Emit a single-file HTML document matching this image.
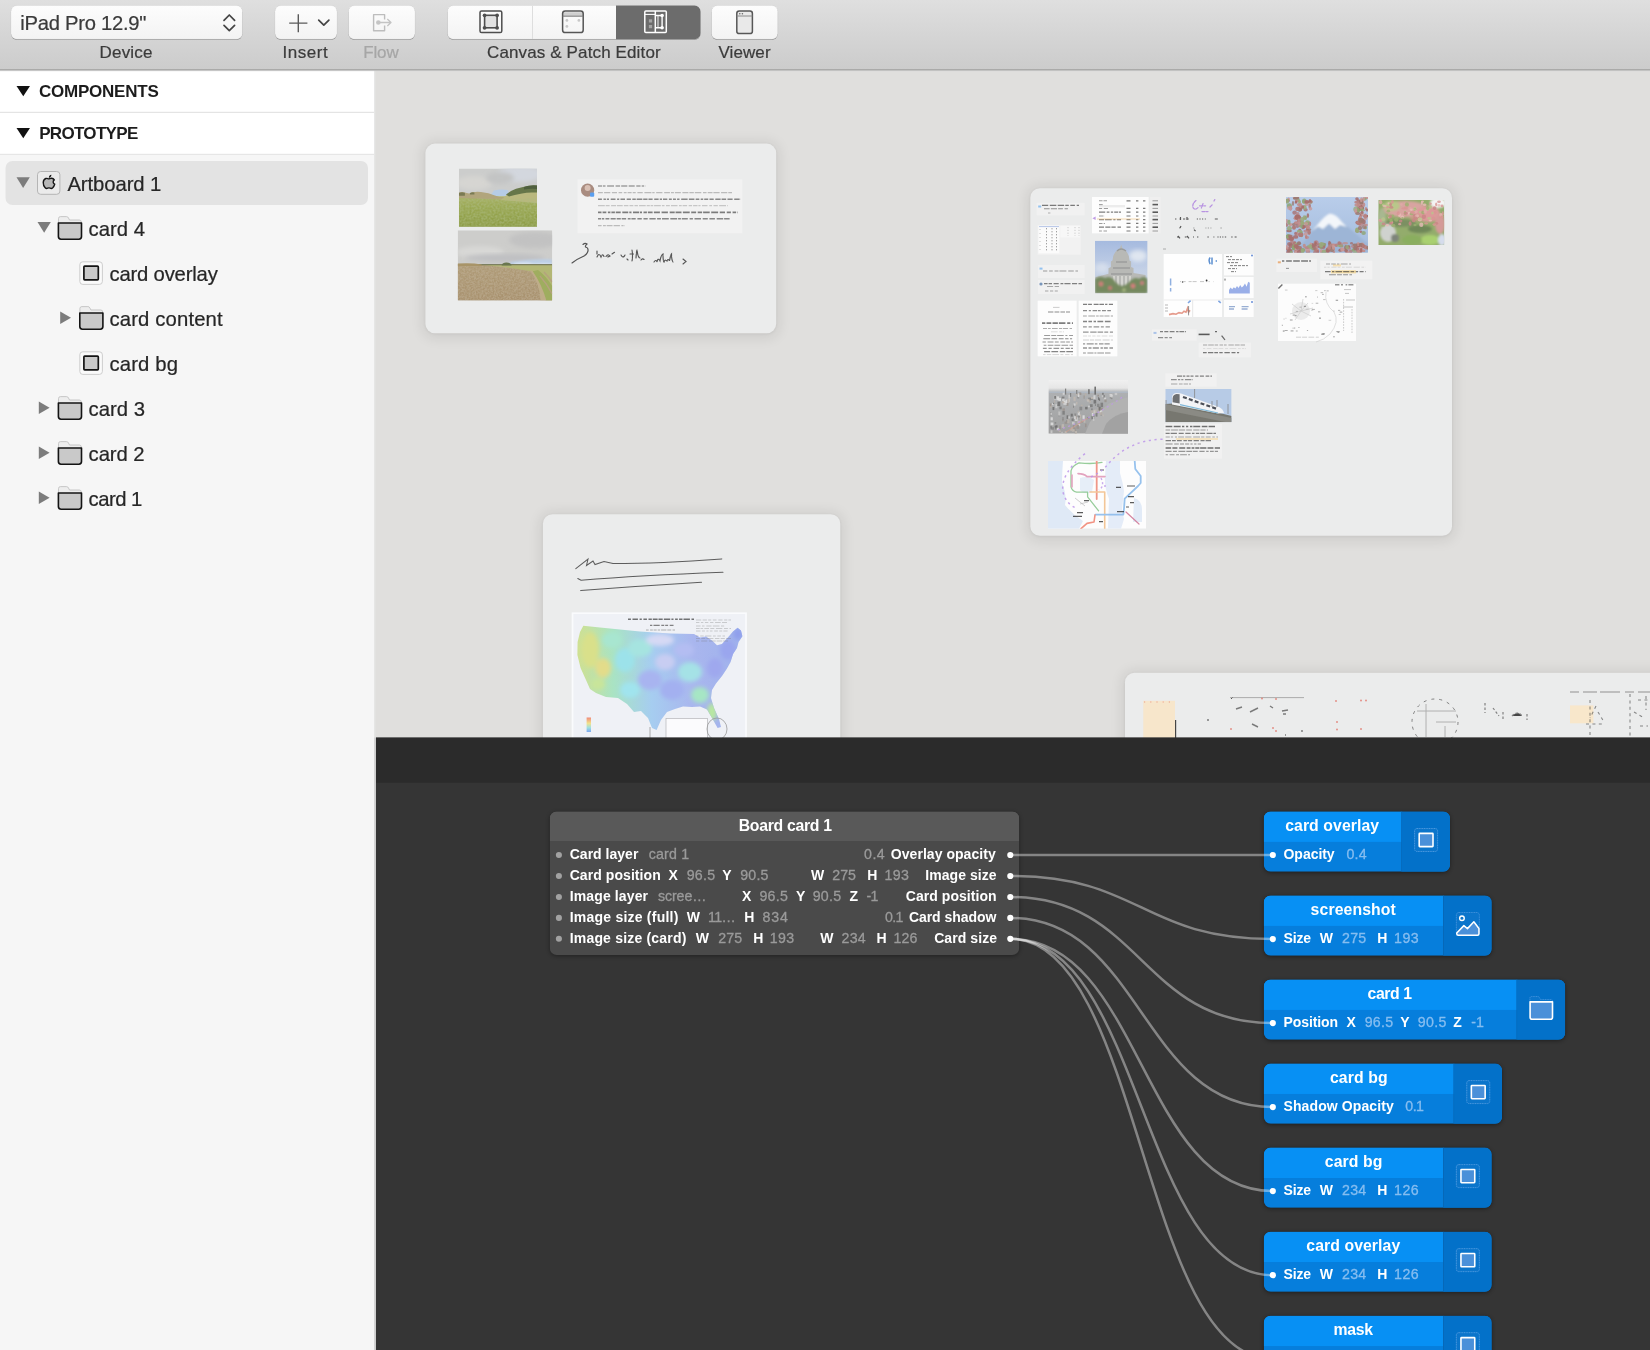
<!DOCTYPE html>
<html><head><meta charset="utf-8"><title>Origami Studio</title>
<style>
html,body{margin:0;padding:0;}
body{width:1650px;height:1350px;overflow:hidden;position:relative;background:#f6f6f6;font-family:"Liberation Sans",sans-serif;}
.a{position:absolute;}
.t{position:absolute;white-space:pre;line-height:1;font-family:"Liberation Sans",sans-serif;}
svg{position:absolute;overflow:visible;}
.btn{position:absolute;top:5.5px;height:34px;border-radius:6px;background:linear-gradient(#fdfdfd,#f4f4f4);box-shadow:0 0 0 0.5px rgba(0,0,0,.10),0 1px 1.5px rgba(0,0,0,.22);}
</style></head><body>
<!-- canvas -->
<div class="a" id="cv" style="left:0;top:0;width:1650px;height:737.6px;overflow:hidden;background:#e0dfdd;">
<svg style="left:0;top:0" width="1650" height="738" viewBox="0 0 1650 738">
<defs>
<filter id="b1" x="-20%" y="-20%" width="140%" height="140%"><feGaussianBlur stdDeviation="0.9"/></filter>
<filter id="b2" x="-20%" y="-20%" width="140%" height="140%"><feGaussianBlur stdDeviation="2"/></filter>
<filter id="noiseg" x="0" y="0" width="100%" height="100%"><feTurbulence type="fractalNoise" baseFrequency="0.5" numOctaves="2" seed="9" result="n"/><feColorMatrix in="n" type="matrix" values="0 0 0 0 0.42  0 0 0 0 0.50  0 0 0 0 0.22  1.7 1.7 0 0 -1.2"/><feComposite in2="SourceGraphic" operator="in"/></filter>
<filter id="noise" x="0" y="0" width="100%" height="100%"><feTurbulence type="fractalNoise" baseFrequency="0.55" numOctaves="2" seed="4" result="n"/><feColorMatrix in="n" type="matrix" values="0 0 0 0 0.52  0 0 0 0 0.43  0 0 0 0 0.30  1.8 1.8 0 0 -1.3"/><feComposite in2="SourceGraphic" operator="in"/></filter>
<filter id="b0" x="-10%" y="-10%" width="120%" height="120%"><feGaussianBlur stdDeviation="0.45"/></filter>
<linearGradient id="sky1" x1="0" y1="0" x2="0" y2="1"><stop offset="0" stop-color="#cbcfd5"/><stop offset="1" stop-color="#dcdcda"/></linearGradient>
<linearGradient id="field1" x1="0" y1="0" x2="0" y2="1"><stop offset="0" stop-color="#aab369"/><stop offset="0.35" stop-color="#9aa852"/><stop offset="1" stop-color="#8c9c46"/></linearGradient>
<linearGradient id="soil" x1="0" y1="0" x2="0" y2="1"><stop offset="0" stop-color="#b09c78"/><stop offset="1" stop-color="#a8916e"/></linearGradient>
<linearGradient id="usg" x1="0" y1="0" x2="1" y2="0"><stop offset="0" stop-color="#cfe092"/><stop offset="0.22" stop-color="#a9e3c4"/><stop offset="0.45" stop-color="#a6cdf0"/><stop offset="0.7" stop-color="#a9b6ee"/><stop offset="1" stop-color="#9fb2ec"/></linearGradient>
<linearGradient id="ramp" x1="0" y1="0" x2="0" y2="1"><stop offset="0" stop-color="#f08a7a"/><stop offset="0.4" stop-color="#f3e28a"/><stop offset="0.7" stop-color="#9fe0e0"/><stop offset="1" stop-color="#7fa8f0"/></linearGradient>
<linearGradient id="cap" x1="0" y1="0" x2="0" y2="1"><stop offset="0" stop-color="#a5badf"/><stop offset="0.55" stop-color="#c3d0e6"/><stop offset="1" stop-color="#cfd6e0"/></linearGradient>
<linearGradient id="fuji" x1="0" y1="0" x2="0" y2="1"><stop offset="0" stop-color="#b9cdea"/><stop offset="1" stop-color="#a3bbdc"/></linearGradient>
<linearGradient id="city" x1="0" y1="0" x2="0" y2="1"><stop offset="0" stop-color="#f0f0f0"/><stop offset="0.15" stop-color="#e6e6e6"/><stop offset="0.23" stop-color="#aeb0b2"/><stop offset="1" stop-color="#a0a0a0"/></linearGradient>
<clipPath id="cp1"><rect x="458.9" y="168.5" width="78.1" height="58.2"/></clipPath>
<clipPath id="cp2"><rect x="457.7" y="230.3" width="94.5" height="70.3"/></clipPath>
<clipPath id="cpcap"><rect x="1095" y="240.7" width="52.6" height="52.6"/></clipPath>
<clipPath id="cpfuji"><rect x="1286" y="197" width="82" height="55.7"/></clipPath>
<clipPath id="cpgar"><rect x="1378.3" y="200" width="66" height="45"/></clipPath>
<clipPath id="cpcity"><rect x="1048.4" y="380" width="79.6" height="53.7"/></clipPath>
<clipPath id="cptrain"><rect x="1165.3" y="389" width="66.3" height="33.3"/></clipPath>
<clipPath id="cptm"><rect x="1048" y="461" width="98" height="67.7"/></clipPath>
<clipPath id="cpus"><rect x="573.2" y="613.9" width="172.2" height="130"/></clipPath>
</defs>
<filter id="csh" x="-10%" y="-10%" width="120%" height="120%"><feGaussianBlur stdDeviation="7"/></filter><filter id="csh2" x="-5%" y="-5%" width="110%" height="110%"><feGaussianBlur stdDeviation="1.4"/></filter>
<rect x="422.9" y="142.1" width="355.8" height="195.7" rx="11" fill="#000" opacity=".085" filter="url(#csh)"/>
<rect x="425.4" y="144.1" width="350.8" height="189.7" rx="9.5" fill="#000" opacity=".05" filter="url(#csh2)"/>
<rect x="425.4" y="143.6" width="350.8" height="189.7" rx="9.5" fill="#ebecec"/>
<rect x="1027.8" y="186.8" width="426.7" height="353.4" rx="11" fill="#000" opacity=".085" filter="url(#csh)"/>
<rect x="1030.3" y="188.8" width="421.7" height="347.4" rx="9.5" fill="#000" opacity=".05" filter="url(#csh2)"/>
<rect x="1030.3" y="188.3" width="421.7" height="347.4" rx="9.5" fill="#ebecec"/>
<rect x="540.4" y="512.7" width="302.4" height="306" rx="11" fill="#000" opacity=".085" filter="url(#csh)"/>
<rect x="542.9" y="514.7" width="297.4" height="300" rx="9.5" fill="#000" opacity=".05" filter="url(#csh2)"/>
<rect x="542.9" y="514.2" width="297.4" height="300" rx="9.5" fill="#ebecec"/>
<rect x="1122.5" y="671.2" width="605" height="306" rx="11" fill="#000" opacity=".085" filter="url(#csh)"/>
<rect x="1125" y="673.2" width="600" height="300" rx="9.5" fill="#000" opacity=".05" filter="url(#csh2)"/>
<rect x="1125" y="672.7" width="600" height="300" rx="9.5" fill="#ebecec"/>
<g clip-path="url(#cp1)">
<rect x="458.9" y="168.5" width="78.1" height="58.5" fill="#cccdcc" />
<ellipse cx="520" cy="174" rx="22" ry="8" fill="#d3d7de" filter="url(#b2)"/>
<ellipse cx="474" cy="183" rx="18" ry="7" fill="#d6d5d2" filter="url(#b2)"/>
<ellipse cx="500" cy="178" rx="14" ry="6" fill="#c3c4c4" filter="url(#b2)"/>
<path d="M490 196 L494 190.4 Q501 188.6 508 190 L509 196 Z" fill="#b6cce6" filter="url(#b0)"/>
<rect x="458.9" y="196.4" width="78.1" height="30.6" fill="url(#field1)" />
<g filter="url(#b0)">
<path d="M458.9 198 V192.6 q3 -1.4 6 0 l4 1 q5 -2.4 12 -1.6 q8 0.6 14 3.4 l6 2 l6 -0.6 v3 Z" fill="#b1a57c"/>
<path d="M458.9 193 q3 -1.6 6 -0.2 v3 h-6 Z M470 193 q2 -1.4 4.4 -0.4 v2 h-4.4Z" fill="#7a7a52"/>
<path d="M502 199 L509 193 Q516 189.6 522 188.6 Q530 186 537 186.6 V203 L500 200 Z" fill="#b9b87e"/>
<path d="M506 194.6 L511 191 Q516 188 521 187.4 Q528 185.2 537 185.6 V192.6 Q528 192 522 193.4 Q514 195 509 196.6 Z" fill="#66764a"/>
<path d="M524 187 q6 -2.4 13 -1.6 v3.6 q-7 -0.6 -13 0.6 Z" fill="#4f5f3c"/>
</g>
<rect x="458.9" y="198.5" width="78.1" height="28.5" filter="url(#noiseg)" opacity=".55"/>
</g>
<g clip-path="url(#cp2)">
<rect x="457.7" y="230.3" width="94.5" height="70.3" fill="#cdcdcb" />
<ellipse cx="535" cy="240" rx="26" ry="8" fill="#c2c2c2" filter="url(#b2)"/>
<ellipse cx="480" cy="252" rx="24" ry="6" fill="#d8d8d6" filter="url(#b2)"/>
<ellipse cx="505" cy="258" rx="40" ry="4" fill="#bfc0c2" filter="url(#b2)"/>
<path d="M510 262 q20 -3.4 42.2 -2.6 v6.4 h-42 Z" fill="#bccfe6" filter="url(#b1)"/>
<path d="M514 263.4 q12 -2 20 0.4 q10 -1 18 0 v2 h-38 Z" fill="#e9edf2" filter="url(#b1)" opacity=".8"/>
<rect x="457.7" y="264.6" width="94.5" height="36.0" fill="url(#soil)" />
<g filter="url(#b0)">
<path d="M484 265 H552.2 V300.6 H546 Q540 282 532 271.6 L510 268 Z" fill="#b3b774"/>
<path d="M532 271.6 Q541 284 545.6 300.6 H552.2 V286 Q546 276 538 270 Z" fill="#9fad5e"/>
<path d="M540 276 q7 8 12.2 18 M544 272 q5 5 8.2 10" stroke="#b5a27e" stroke-width="1.4" fill="none"/>
<path d="M530 270 Q540 284 540.6 300.6 H546.4 Q541.6 284 532.6 271 Z" fill="#bfad88"/>
<path d="M457.7 264.6 H552.2" stroke="#7d8060" stroke-width="1.2"/>
<path d="M501.6 265.4 q1 -3 5 -2.8 q4 0 5 2.8 Z" fill="#6a7650"/>
<path d="M457.7 263.6 q14 -1 24 1 v1.4 h-24 Z" fill="#a89468"/>
</g>
<path d="M457.7 266 H500 L531 271 Q541 284 541 300.6 H457.7 Z" filter="url(#noise)" opacity=".6"/>
</g>
<rect x="577.5" y="179.4" width="164.8" height="53.8" fill="#f2f2f2" />
<circle cx="587.6" cy="190.2" r="6.6" fill="#a98c80"/><circle cx="587.6" cy="188" r="3" fill="#d9c0b4"/><rect x="590" y="192.6" width="4.2" height="4.2" rx="1" fill="#5a9ff0"/>
<g filter="url(#b0)">
<path d="M598.0 186.0 H646.0" stroke="#555" stroke-width="1.29" stroke-dasharray="4.2 0.8 2.5 1.6 6.9 1.6 4.5 1.1 6.1 1.4 6.0 1.6 4.2 1.2 2.5 1.6 2.8 1.8" opacity="0.52" fill="none"/>
<path d="M598.0 192.6 H732.0" stroke="#666" stroke-width="1.29" stroke-dasharray="4.8 1.3 6.2 1.6 5.1 1.6 3.6 1.6 2.8 1.0 4.0 1.1 3.0 1.7 5.3 1.7 7.0 0.9 2.3 1.6 6.2 1.8 5.7 1.1 2.9 1.0 5.9 1.6 6.0 1.0 4.4 1.0 6.5 1.7 3.5 1.2 4.8 0.9 6.2 1.5 6.2 1.0 4.4 1.1" opacity="0.40" fill="none"/>
<path d="M598.0 199.2 H741.0" stroke="#333" stroke-width="1.47" stroke-dasharray="3.9 1.6 2.4 1.0 2.1 1.7 4.8 1.6 2.1 1.3 4.5 1.7 4.2 1.4 3.5 0.9 5.6 0.9 4.3 1.0 4.1 1.6 4.4 1.2 2.2 1.0 4.3 1.6 2.9 1.2 2.9 1.2 2.4 1.7 6.4 1.3 5.5 1.3 3.6 1.4 2.5 1.0 4.0 1.3 4.2 1.6 5.3 1.0 4.5 1.4 5.1 1.6 5.4 1.3 3.7 1.4" opacity="0.56" fill="none"/>
<path d="M598.0 205.6 H728.0" stroke="#777" stroke-width="1.20" stroke-dasharray="6.8 0.9 3.9 1.5 4.9 0.9 5.8 1.2 4.5 1.1 3.8 1.2 3.4 1.2 6.6 1.0 3.1 0.8 2.6 0.9 6.7 1.1 2.6 1.5 3.8 1.2 6.5 1.5 2.7 0.9 4.5 1.6 3.4 1.0 4.4 0.9 2.1 1.5 5.5 1.8 2.7 1.5 4.3 1.4 6.8 1.3 6.9 1.5" opacity="0.36" fill="none"/>
<path d="M598.0 212.4 H738.0" stroke="#2a2a2a" stroke-width="1.56" stroke-dasharray="3.5 1.1 3.7 1.6 2.5 1.0 3.5 0.9 4.9 1.6 5.9 1.1 2.2 1.5 6.1 0.8 2.1 1.5 3.4 1.0 4.7 1.3 6.0 1.7 6.3 1.8 5.0 0.9 5.9 1.4 6.8 1.5 4.9 1.6 4.4 1.0 6.6 1.5 6.9 1.7 5.2 1.8 4.1 1.7 3.5 1.4 2.4 1.6" opacity="0.58" fill="none"/>
<path d="M598.0 218.8 H730.0" stroke="#333" stroke-width="1.47" stroke-dasharray="3.2 0.8 2.2 1.3 3.8 1.3 5.1 1.0 4.1 0.9 4.4 1.7 2.8 0.8 4.3 1.7 4.4 1.7 4.2 1.7 6.3 1.4 3.8 1.1 6.8 1.5 6.8 1.0 2.8 0.9 6.0 1.8 3.3 1.6 6.5 1.7 5.1 1.6 5.5 1.8 6.5 0.9 5.5 1.6" opacity="0.56" fill="none"/>
<path d="M598.0 225.6 H625.0" stroke="#666" stroke-width="1.20" stroke-dasharray="3.6 1.4 2.8 0.9 5.8 1.1 6.3 1.5 2.2 1.0 3.4 1.2" opacity="0.40" fill="none"/>
</g>
<g fill="none" stroke="#3a3a3a" stroke-width="1.15" stroke-linecap="round" opacity=".85" filter="url(#b0)"><path d="M583 244.5 q2 -2 4 -0.5 q-2 1.5 -1.5 3 q3 0.5 2.5 4 q-1 4 -6 6 q-5 2 -10 6"/><path d="M597 254 v-3 M597 257 q2 -5 4 0 q1.5 -4 3 -0.5 M606 256.5 q2 -3 4 -0.5 q-2.5 1.5 -3 0.5 M612 254 l3 -2" stroke-dasharray="3 1.2"/><path d="M621 255 q2 4 4 0 M627 259 l1 1" stroke-dasharray="2.5 1"/><path d="M632 250 q1 6 0 11 M630 254 h4 M636 258 q0.5 -7 1 -8 q1 8 3 8 M641 260 q1.5 -2 3 -0.5" stroke-dasharray="3.5 1"/><path d="M654 262 q2 -3 3 0 q1 -5 3 -1 q1 -6 3 -7 q0 7 1 8 q1 -3 3 -1 q1 -3 2.5 0 q1 -6 2 -7 q0 6 1.5 8 M683 259 l3 2.5 l-3 2.5" stroke-dasharray="4 0.9"/></g>
<g fill="none" stroke="#444" stroke-width="1.05" stroke-linecap="round" opacity=".85" filter="url(#b0)"><path d="M575.8 568.6 L588 559 L586.5 565.5 L593 561 L595 564.5 L604 561.5 L613 563.5 Q660 563.5 721.8 558.9"/><path d="M577.8 578.5 L581 580.2 Q640 575.5 723 572.3"/><path d="M580.7 590.6 Q640 586 701.5 582.3"/></g>
<rect x="571.7" y="612.4" width="175.2" height="132.6" fill="#fafbfd" />
<g clip-path="url(#cpus)">
<rect x="573.2" y="613.9" width="172.2" height="131.1" fill="#eff1f6" />
<path d="M583.3 625.8 L600 627.6 L640 631.6 L670 633.4 L694 634 L700 637.6 L706 636.4 L712 640.6 L717 645.2 L722 644 L727 638.4 L733 631.4 L737.6 627.8 L741 630.4 L742.4 636.2 L738.6 642 L737 648 L733 654 L730.6 662 L727 668.6 L722 676 L716 683.6 L712 690 L711 698 L714 708 L719 719 L721 727 L717.6 728 L712 718 L707 709.6 L700 706.4 L692 707 L683 706.4 L675 709 L667 712 L661 720 L656.6 730 L652 728 L648 718 L641 711 L634 712 L627 704 L618 698 L606 697 L596 693 L590 689 L586 680 L580.6 668 L577.4 655 L577.6 642 L580 632 Z" fill="url(#usg)"/>
<clipPath id="cpusshape"><path d="M583.3 625.8 L600 627.6 L640 631.6 L670 633.4 L694 634 L700 637.6 L706 636.4 L712 640.6 L717 645.2 L722 644 L727 638.4 L733 631.4 L737.6 627.8 L741 630.4 L742.4 636.2 L738.6 642 L737 648 L733 654 L730.6 662 L727 668.6 L722 676 L716 683.6 L712 690 L711 698 L714 708 L719 719 L721 727 L717.6 728 L712 718 L707 709.6 L700 706.4 L692 707 L683 706.4 L675 709 L667 712 L661 720 L656.6 730 L652 728 L648 718 L641 711 L634 712 L627 704 L618 698 L606 697 L596 693 L590 689 L586 680 L580.6 668 L577.4 655 L577.6 642 L580 632 Z"/></clipPath>
<g clip-path="url(#cpusshape)" filter="url(#b2)">
<ellipse cx="590" cy="650" rx="9" ry="18" fill="#d9e08a"/>
<ellipse cx="603" cy="668" rx="8" ry="10" fill="#e3dc8a"/>
<ellipse cx="612" cy="640" rx="10" ry="8" fill="#a8e6d0"/>
<ellipse cx="625" cy="660" rx="10" ry="12" fill="#9ce2ea"/>
<ellipse cx="640" cy="648" rx="12" ry="9" fill="#a6e4e0"/>
<ellipse cx="650" cy="680" rx="12" ry="10" fill="#a8b4f0"/>
<ellipse cx="665" cy="662" rx="10" ry="8" fill="#c8cdf2"/>
<ellipse cx="672" cy="690" rx="12" ry="10" fill="#a3b0f0"/>
<ellipse cx="690" cy="672" rx="12" ry="10" fill="#a5e2e6"/>
<ellipse cx="700" cy="695" rx="9" ry="8" fill="#a6e6c4"/>
<ellipse cx="715" cy="668" rx="8" ry="10" fill="#9fa8ee"/>
<ellipse cx="728" cy="650" rx="8" ry="10" fill="#9aa6ee"/>
<ellipse cx="660" cy="640" rx="14" ry="6" fill="#d6d9f4"/>
<ellipse cx="630" cy="690" rx="10" ry="8" fill="#a0e4ee"/>
<ellipse cx="598" cy="684" rx="7" ry="6" fill="#c9e59a"/>
<ellipse cx="684" cy="650" rx="10" ry="7" fill="#b4bdf2"/>
<ellipse cx="738" cy="634" rx="5" ry="6" fill="#8f9fec"/>
<ellipse cx="712" cy="712" rx="5" ry="9" fill="#b8e8a0"/>
</g>
<g filter="url(#b0)">
<path d="M628.0 619.2 H694.0" stroke="#333" stroke-width="1.38" stroke-dasharray="2.9 1.6 5.4 1.7 2.2 1.6 3.5 1.6 3.3 1.0 4.8 0.9 4.2 1.2 6.3 1.2 2.1 1.6 2.7 1.3 3.4 1.0 6.4 1.6 3.5 1.2" opacity="0.68" fill="none"/>
<path d="M650.0 625.4 H674.0" stroke="#444" stroke-width="1.20" stroke-dasharray="2.3 1.2 6.2 1.6 2.9 1.0 2.9 1.6 3.8 1.1" opacity="0.64" fill="none"/>
<path d="M646.0 630.0 H676.0" stroke="#666" stroke-width="1.10" stroke-dasharray="2.7 1.4 2.7 0.8 3.1 1.0 2.4 1.0 5.3 0.9 3.9 1.3 2.5 1.2" opacity="0.48" fill="none"/>
<path d="M696.0 620.0 H731.0" stroke="#777" stroke-width="0.74" stroke-dasharray="5.2 1.4 4.3 1.2 3.1 1.6 3.7 1.8 4.2 1.6 3.2 1.1 7.0 1.3" opacity="0.44" fill="none"/>
<path d="M696.0 622.5 H728.0" stroke="#777" stroke-width="0.74" stroke-dasharray="3.4 1.5 2.4 1.6 3.4 1.8 3.3 1.7 5.6 1.3 5.0 1.6" opacity="0.44" fill="none"/>
<path d="M696.0 626.0 H725.0" stroke="#777" stroke-width="0.74" stroke-dasharray="4.5 1.5 2.5 1.8 5.2 1.3 6.7 1.5 3.1 1.0" opacity="0.44" fill="none"/>
<path d="M696.0 628.5 H731.0" stroke="#777" stroke-width="0.74" stroke-dasharray="3.7 0.8 2.6 1.2 4.7 1.3 4.0 1.6 6.4 1.7 3.9 1.6 6.7 1.1" opacity="0.44" fill="none"/>
<path d="M696.0 631.0 H728.0" stroke="#777" stroke-width="0.74" stroke-dasharray="4.5 1.4 3.0 1.5 2.1 1.3 2.7 1.7 3.7 1.4 2.9 1.2 4.2 1.6" opacity="0.44" fill="none"/>
<path d="M696.0 636.0 H725.0" stroke="#777" stroke-width="0.74" stroke-dasharray="2.4 1.8 3.5 1.5 6.2 1.6 2.8 1.5 3.6 1.6 6.1 1.0" opacity="0.44" fill="none"/>
<path d="M696.0 638.5 H731.0" stroke="#777" stroke-width="0.74" stroke-dasharray="3.9 1.4 4.0 1.1 7.0 1.5 4.5 1.3 4.1 1.3 5.1 1.5" opacity="0.44" fill="none"/>
<path d="M696.0 641.0 H728.0" stroke="#777" stroke-width="0.74" stroke-dasharray="3.3 1.8 6.2 1.6 6.9 0.8 5.6 0.9 6.1 1.5" opacity="0.44" fill="none"/>
</g>
<rect x="586.6" y="717.5" width="4.4" height="14.5" fill="url(#ramp)" />
<rect x="666.0" y="718.4" width="41.6" height="21.6" fill="#fbfbfd" stroke="#b5b5b8" stroke-width="0.7"/>
<ellipse cx="717" cy="729" rx="10" ry="11" fill="none" stroke="#9a9a9a" stroke-width="0.8"/>
<path d="M650 727 V740" stroke="#999" stroke-width="0.8"/>
</g>
<rect x="1143.3" y="700.8" width="31.7" height="39.2" fill="#f7e6cb" />
<g filter="url(#b0)">
<path d="M1144 702 h30" stroke="#e88070" stroke-width="1.2" stroke-dasharray="1.2 5" opacity=".7"/>
<path d="M1175.6 720 V738" stroke="#444" stroke-width="1.2"/>
<path d="M1230 697.6 H1304" stroke="#888" stroke-width="0.9" opacity=".7"/><path d="M1231 699 l1.5 -1.5" stroke="#555" stroke-width="1"/>
<circle cx="1262" cy="698.5" r="1" fill="#e27a6e" opacity=".8"/>
<circle cx="1276" cy="699" r="1" fill="#e27a6e" opacity=".8"/>
<circle cx="1231" cy="729" r="1" fill="#e27a6e" opacity=".8"/>
<circle cx="1273" cy="728" r="1" fill="#e27a6e" opacity=".8"/>
<circle cx="1276" cy="731" r="1" fill="#e27a6e" opacity=".8"/>
<circle cx="1336" cy="701" r="1" fill="#e27a6e" opacity=".8"/>
<circle cx="1361" cy="700.5" r="1" fill="#e27a6e" opacity=".8"/>
<circle cx="1366" cy="700.5" r="1" fill="#e27a6e" opacity=".8"/>
<circle cx="1337" cy="722" r="1" fill="#e27a6e" opacity=".8"/>
<circle cx="1337" cy="729.5" r="1" fill="#e27a6e" opacity=".8"/>
<circle cx="1361" cy="729" r="1" fill="#e27a6e" opacity=".8"/>
<path d="M1236 709 l6 -2 M1250 712 l8 -4 M1252 724 l6 3 M1270 706 l3 2 M1282 711 l6 -1 M1283 714 h3 M1302 730 v2 M1285 735 h1 M1207 720 h2" stroke="#555" stroke-width="1.4" opacity=".75"/>
<ellipse cx="1435" cy="722" rx="23" ry="23" fill="none" stroke="#666" stroke-width="1" stroke-dasharray="3 5" opacity=".8"/>
<path d="M1417 711 H1456 M1426 704 V737 M1436 722 H1456 M1445 726 V737" stroke="#aaa" stroke-width="1" opacity=".9"/>
<path d="M1485 703 v10 M1493 708 l6 8 M1503 712 v8 M1512 716 q6 -6 10 0 M1527 714 v6" stroke="#555" stroke-width="1.2" stroke-dasharray="2.5 2" opacity=".7"/>
<rect x="1570.0" y="705.4" width="23.4" height="17.9" fill="#f8e7cb" />
<path d="M1570 692 H1650" stroke="#555" stroke-width="1.1" stroke-dasharray="9 4 14 3 20 5" opacity=".6"/>
<path d="M1590 700 v36 M1596 706 l-6 12 M1598 712 l6 10 M1586 724 h16 M1630 694 v44 M1638 700 h12 M1634 712 l10 6 M1640 726 h8 M1646 696 v14" stroke="#444" stroke-width="1.1" stroke-dasharray="3 3.4" opacity=".6"/>
</g>
<rect x="1036.7" y="202.9" width="48.0" height="12.4" fill="#f1f1f1" />
<rect x="1038.2" y="205.5" width="3" height="2" fill="#7ab6f0" opacity=".8"/>
<g filter="url(#b0)">
<rect x="1036.7" y="202.9" width="48.0" height="12.4" fill="none"/>
<path d="M1042.0 205.4 H1079.0" stroke="#333" stroke-width="1.20" stroke-dasharray="6.2 1.6 6.5 1.4 6.4 1.2 3.5 1.5 4.6 1.8 5.4 1.5" opacity="0.64" fill="none"/>
<path d="M1044.0 208.8 H1068.0" stroke="#444" stroke-width="1.10" stroke-dasharray="5.6 1.3 6.1 1.1 4.8 1.7 3.3 1.1" opacity="0.56" fill="none"/>
<path d="M1048.0 213.0 H1051.0" stroke="#555" stroke-width="0.92" stroke-dasharray="2.4 1.3" opacity="0.48" fill="none"/>
</g>
<rect x="1037.7" y="225.3" width="43.0" height="29.4" fill="#f2f2f2" />
<rect x="1038.4" y="225.6" width="21.0" height="27.8" fill="#fbfbfb" />
<rect x="1060.5" y="225.8" width="19.5" height="11.6" fill="#f7f7f7" />
<g filter="url(#b0)" opacity=".6"><path d="M1039 226.6 H1059" stroke="#6a8ad0" stroke-width="0.8"/>
<path d="M1046.5 228 V252" stroke="#555" stroke-width="0.9" stroke-dasharray="1.4 1.6"/>
<path d="M1052 228 V252" stroke="#555" stroke-width="0.9" stroke-dasharray="1.4 1.6"/>
<path d="M1056.5 228 V252" stroke="#555" stroke-width="0.9" stroke-dasharray="1.4 1.6"/>
<path d="M1068 227 V236" stroke="#888" stroke-width="0.7" stroke-dasharray="1.2 1.6"/>
<path d="M1075 227 V236" stroke="#888" stroke-width="0.7" stroke-dasharray="1.2 1.6"/>
<path d="M1079 227 V236" stroke="#888" stroke-width="0.7" stroke-dasharray="1.2 1.6"/>
<path d="M1040 229 V252" stroke="#888" stroke-width="0.8" stroke-dasharray="1 3"/></g>
<rect x="1038.0" y="265.0" width="46.7" height="13.0" fill="#f1f1f1" />
<rect x="1039.5" y="267.6" width="3" height="2" fill="#7ab6f0" opacity=".8"/>
<g filter="url(#b0)">
<rect x="1038.0" y="265.0" width="46.7" height="13.0" fill="none"/>
<path d="M1043.0 271.0 H1078.0" stroke="#444" stroke-width="1.10" stroke-dasharray="4.3 1.8 3.7 1.7 4.0 0.9 7.0 1.8 5.6 1.6 6.2 1.2" opacity="0.48" fill="none"/>
</g>
<rect x="1038.0" y="280.0" width="46.7" height="14.0" fill="#f1f1f1" />
<g filter="url(#b0)">
<rect x="1038.0" y="280.0" width="46.7" height="14.0" fill="none"/>
<path d="M1044.0 283.6 H1082.0" stroke="#333" stroke-width="1.20" stroke-dasharray="3.6 1.0 3.4 1.6 5.1 1.8 2.8 1.1 6.1 1.5 5.1 1.4 4.2 1.7" opacity="0.60" fill="none"/>
<path d="M1047.0 286.6 H1059.0" stroke="#555" stroke-width="1.01" stroke-dasharray="6.1 1.6 5.6 1.2" opacity="0.48" fill="none"/>
<path d="M1045.0 291.0 H1058.0" stroke="#555" stroke-width="1.01" stroke-dasharray="3.4 1.6 3.2 1.5 3.1 1.3" opacity="0.48" fill="none"/>
</g>
<circle cx="1041" cy="284" r="1.6" fill="#5b7fae" opacity=".8"/>
<rect x="1037.7" y="300.7" width="39.0" height="55.6" fill="#fdfdfd" />
<rect x="1078.7" y="300.7" width="38.6" height="55.6" fill="#fdfdfd" />
<g filter="url(#b0)">
<path d="M1053.0 307.4 H1060.0" stroke="#666" stroke-width="0.83" stroke-dasharray="6.5 1.5" opacity="0.40" fill="none"/>
<path d="M1048.0 312.0 H1070.0" stroke="#444" stroke-width="1.10" stroke-dasharray="5.4 1.1 4.8 1.1 4.6 1.0 6.8 1.0" opacity="0.60" fill="none"/>
<path d="M1042.0 323.0 H1073.0" stroke="#333" stroke-width="1.75" stroke-dasharray="3.3 1.2 4.8 1.2 5.4 1.0 6.5 1.8 3.1 1.6 2.1 1.0" opacity="0.64" fill="none"/>
<path d="M1043.0 328.4 H1072.0" stroke="#555" stroke-width="1.01" stroke-dasharray="4.0 1.0 2.7 1.3 5.7 1.3 3.2 0.8 5.0 1.6 4.7 1.2" opacity="0.48" fill="none"/>
<path d="M1051.0 331.8 H1064.0" stroke="#777" stroke-width="0.74" stroke-dasharray="6.6 1.6 2.7 0.9 5.1 0.9" opacity="0.32" fill="none"/>
<path d="M1044.1 335.6 H1073.0" stroke="#444" stroke-width="1.01" stroke-dasharray="6.0 1.1 5.0 0.9 6.6 1.7 2.0 1.7 5.8 1.7" opacity="0.52" fill="none"/>
<path d="M1043.3 338.8 H1073.0" stroke="#333" stroke-width="1.10" stroke-dasharray="6.8 1.4 5.6 1.7 4.8 1.5 3.4 1.5 2.1 1.6" opacity="0.56" fill="none"/>
<path d="M1042.5 342.0 H1073.0" stroke="#444" stroke-width="1.20" stroke-dasharray="3.4 1.7 5.9 1.4 3.8 1.7 4.8 0.9 3.8 1.3 3.9 1.3" opacity="0.56" fill="none"/>
<path d="M1043.7 345.2 H1073.0" stroke="#444" stroke-width="1.10" stroke-dasharray="2.7 1.4 5.6 1.0 5.9 1.2 6.6 1.4 3.8 1.2" opacity="0.56" fill="none"/>
<path d="M1042.9 348.4 H1073.0" stroke="#444" stroke-width="1.10" stroke-dasharray="3.8 1.8 3.2 1.8 5.6 1.7 2.9 1.8 4.3 1.1 5.0 1.4" opacity="0.56" fill="none"/>
<path d="M1044.1 351.6 H1073.0" stroke="#333" stroke-width="1.20" stroke-dasharray="6.0 1.3 6.7 1.7 5.4 1.1 6.8 1.2" opacity="0.60" fill="none"/>
<path d="M1043.1 354.6 H1073.0" stroke="#777" stroke-width="0.83" stroke-dasharray="2.5 1.2 4.5 1.0 6.8 1.3 3.0 1.7 4.4 1.4 3.8 1.3" opacity="0.36" fill="none"/>
<path d="M1083.0 304.4 H1113.0" stroke="#333" stroke-width="1.20" stroke-dasharray="4.1 1.0 3.8 1.8 4.9 0.8 4.6 1.1 2.3 1.5 6.2 0.9" opacity="0.64" fill="none"/>
<path d="M1083.0 310.6 H1111.0" stroke="#333" stroke-width="1.38" stroke-dasharray="4.0 1.8 2.1 1.7 4.4 0.9 2.7 1.4 3.9 1.4 3.6 1.5" opacity="0.56" fill="none"/>
<path d="M1083.0 316.0 H1113.0" stroke="#555" stroke-width="1.20" stroke-dasharray="3.8 1.5 6.8 1.0 2.6 0.9 4.0 0.8 5.1 1.3 6.6 1.7" opacity="0.52" fill="none"/>
<path d="M1083.0 321.4 H1112.0" stroke="#333" stroke-width="1.47" stroke-dasharray="4.0 1.4 3.6 1.6 2.4 1.4 5.8 1.7 5.7 1.5" opacity="0.60" fill="none"/>
<path d="M1083.0 326.8 H1111.0" stroke="#444" stroke-width="1.29" stroke-dasharray="3.8 1.8 3.2 1.8 5.6 1.7 2.9 1.8 4.3 1.1" opacity="0.56" fill="none"/>
<path d="M1083.0 332.2 H1113.0" stroke="#444" stroke-width="1.29" stroke-dasharray="5.6 1.6 6.4 1.0 5.5 1.2 3.9 1.7 4.3 1.4" opacity="0.56" fill="none"/>
<path d="M1083.0 336.0 H1113.0" stroke="#777" stroke-width="0.83" stroke-dasharray="4.2 1.0 2.7 1.4 3.2 1.3 3.5 1.4 5.7 1.5 6.9 1.5" opacity="0.32" fill="none"/>
<path d="M1083.0 340.0 H1113.0" stroke="#666" stroke-width="0.83" stroke-dasharray="6.0 0.9 4.1 0.8 6.3 1.5 7.0 1.3 3.2 1.0" opacity="0.36" fill="none"/>
<path d="M1083.0 343.8 H1110.0" stroke="#444" stroke-width="1.20" stroke-dasharray="2.1 1.6 7.0 1.1 2.6 1.6 4.5 1.0 5.2 1.3" opacity="0.56" fill="none"/>
<path d="M1083.0 348.0 H1113.0" stroke="#444" stroke-width="1.29" stroke-dasharray="4.0 1.5 3.0 1.3 6.1 1.6 2.4 1.0 3.9 1.6 4.4 1.7" opacity="0.56" fill="none"/>
<path d="M1083.0 353.0 H1112.0" stroke="#444" stroke-width="1.20" stroke-dasharray="2.9 1.5 6.1 0.9 2.0 0.9 6.7 1.0 5.5 1.5" opacity="0.56" fill="none"/>
</g>
<rect x="1092.0" y="197.0" width="56.7" height="36.3" fill="#fdfdfd" />
<rect x="1150.0" y="197.0" width="10.7" height="36.3" fill="#efefef" />
<rect x="1099.0" y="205.0" width="26.0" height="2.4" fill="#ececec" />
<g filter="url(#b0)">
<path d="M1099.0 200.8 H1107.0" stroke="#333" stroke-width="1.01" stroke-dasharray="3.5 1.0 4.3 1.8" opacity="0.48" fill="none"/>
<path d="M1126.5 200.8 h4 M1136 200.8 h2.4 M1143 200.8 h2.4" stroke="#444" stroke-width="1.2" opacity=".7"/>
<path d="M1152.5 200.8 h5.5" stroke="#333" stroke-width="1.0" opacity="0.45"/>
<path d="M1099.0 204.6 H1104.0" stroke="#333" stroke-width="1.01" stroke-dasharray="3.7 1.3 2.9 1.3" opacity="0.48" fill="none"/>
<path d="M1152.5 204.6 h5.5" stroke="#333" stroke-width="1.6" opacity="0.8"/>
<path d="M1099.0 208.4 H1108.0" stroke="#333" stroke-width="1.01" stroke-dasharray="3.1 1.7 4.6 1.5" opacity="0.48" fill="none"/>
<path d="M1126.5 208.4 h4 M1136 208.4 h2.4 M1143 208.4 h2.4" stroke="#444" stroke-width="1.2" opacity=".7"/>
<path d="M1152.5 208.4 h5.5" stroke="#333" stroke-width="1.0" opacity="0.45"/>
<path d="M1099.0 212.2 H1121.0" stroke="#333" stroke-width="1.29" stroke-dasharray="6.2 1.5 2.7 1.5 2.2 1.1 3.8 0.8 6.7 1.2" opacity="0.64" fill="none"/>
<path d="M1126.5 212.2 h4 M1136 212.2 h2.4 M1143 212.2 h2.4" stroke="#444" stroke-width="1.2" opacity=".7"/>
<path d="M1152.5 212.2 h5.5" stroke="#333" stroke-width="1.6" opacity="0.8"/>
<path d="M1099.0 216.0 H1105.0" stroke="#333" stroke-width="1.01" stroke-dasharray="4.5 1.4 2.7 1.7" opacity="0.48" fill="none"/>
<path d="M1126.5 216 h4 M1136 216 h2.4 M1143 216 h2.4" stroke="#444" stroke-width="1.2" opacity=".7"/>
<path d="M1152.5 216 h5.5" stroke="#333" stroke-width="1.0" opacity="0.45"/>
<path d="M1099.0 219.6 H1121.0" stroke="#333" stroke-width="1.29" stroke-dasharray="5.0 1.0 6.7 1.6 2.2 1.4 4.1 1.0" opacity="0.64" fill="none"/>
<path d="M1126.5 219.6 h4 M1136 219.6 h2.4 M1143 219.6 h2.4" stroke="#444" stroke-width="1.2" opacity=".7"/>
<path d="M1152.5 219.6 h5.5" stroke="#333" stroke-width="1.6" opacity="0.8"/>
<path d="M1099.0 223.4 H1105.0" stroke="#333" stroke-width="1.01" stroke-dasharray="3.5 1.2 3.9 1.0" opacity="0.48" fill="none"/>
<path d="M1126.5 223.4 h4 M1136 223.4 h2.4 M1143 223.4 h2.4" stroke="#444" stroke-width="1.2" opacity=".7"/>
<path d="M1152.5 223.4 h5.5" stroke="#333" stroke-width="1.0" opacity="0.45"/>
<path d="M1099.0 227.2 H1121.0" stroke="#333" stroke-width="1.29" stroke-dasharray="5.0 1.3 5.1 1.0 4.3 1.8 3.5 1.6" opacity="0.64" fill="none"/>
<path d="M1126.5 227.2 h4 M1136 227.2 h2.4 M1143 227.2 h2.4" stroke="#444" stroke-width="1.2" opacity=".7"/>
<path d="M1152.5 227.2 h5.5" stroke="#333" stroke-width="1.6" opacity="0.8"/>
<path d="M1099.0 231.0 H1107.0" stroke="#333" stroke-width="1.01" stroke-dasharray="2.9 1.6 4.2 0.8" opacity="0.48" fill="none"/>
<path d="M1126.5 231 h4 M1136 231 h2.4 M1143 231 h2.4" stroke="#444" stroke-width="1.2" opacity=".7"/>
<path d="M1152.5 231 h5.5" stroke="#333" stroke-width="1.0" opacity="0.45"/>
<path d="M1097 219 H1140" stroke="#f0c890" stroke-width="0.9" opacity=".8"/>
<path d="M1092.4 218.2 l3.2 -1.8 v3.6 Z" fill="#b48be0" opacity=".85"/>
</g>
<g clip-path="url(#cpcap)">
<rect x="1095.0" y="240.7" width="52.6" height="52.6" fill="url(#cap)" />
<ellipse cx="1138" cy="256" rx="9" ry="6" fill="#dfe6f0" filter="url(#b2)"/><ellipse cx="1102" cy="268" rx="7" ry="5" fill="#d5deec" filter="url(#b2)"/>
<g filter="url(#b0)"><path d="M1121.2 244.5 l1.3 4 q6.5 3 7 12 l1.6 1 v5.4 l2.4 1 v5 l12 2 v18.4 h-50 v-16 l13 -3.6 v-5.4 l2.4 -1.4 v-5.4 l1.6 -1 q0.6 -9 7.4 -12 Z" fill="#b8b9b6"/><path d="M1116 262 h11 M1113 268 h17 M1111 274 h21" stroke="#8e908f" stroke-width="1.1"/><path d="M1114 276 v12 M1118 276 v12 M1122 276 v12 M1126 276 v12 M1130 276 v12" stroke="#dcdcd8" stroke-width="1.5"/><path d="M1117 251 q4 -4 9 0" stroke="#9a9c9c" stroke-width="1.3" fill="none"/></g>
<g filter="url(#b1)"><path d="M1095 293.3 V279 q5 -4 10 -1 q5 -3 9 2 q3 5 8 6 q5 -1 8 -5 q5 -5 9 -2 q5 -4 8.6 0 V293.3 Z" fill="#74895f"/><circle cx="1101" cy="284" r="2.4" fill="#c98078"/><circle cx="1110" cy="288" r="2" fill="#c87a76"/><circle cx="1133" cy="286" r="2.4" fill="#cf7e7a"/><circle cx="1142" cy="283" r="2" fill="#c88080"/><circle cx="1124" cy="290" r="1.8" fill="#a8b880"/></g>
</g>
<g fill="none" stroke="#b38ae0" stroke-width="1.3" stroke-linecap="round" filter="url(#b0)" opacity=".9"><path d="M1196 200.6 q-4 3 -3 7 q2 3 5 0" stroke-dasharray="2.6 1.4"/><path d="M1199.6 205.8 h6 M1203 203.6 l-1.6 4.4 M1210 207 l2.2 -2.2 M1214 201 l0.8 -1.4 M1202 211.6 h6" stroke-dasharray="3 1.2"/></g>
<g filter="url(#b0)" opacity=".8">
<path d="M1175.0 219.0 H1226.0" stroke="#333" stroke-width="1.29" stroke-dasharray="1.4 3.2 1 2.4 2.2 2 1.6 8 1.2 1.4 1.2 1.4 1.2 1.6 1 9 3 40" opacity="0.64" fill="none"/>
<path d="M1179.0 228.0 H1226.0" stroke="#444" stroke-width="1.10" stroke-dasharray="1.2 13 1.2 11 1 1.4 1.2 1.4 1 9 1.4 40" opacity="0.56" fill="none"/>
<path d="M1177.0 237.0 H1245.0" stroke="#333" stroke-width="1.29" stroke-dasharray="1.8 6 1.8 6.4 1 3 1.4 9 1.4 4.6 1 3 1.2 1.2 1.2 1.2 1.2 1.4 1.4 5 1.4 2 2 40" opacity="0.68" fill="none"/>
<path d="M1180.5 217 v3 M1187 217 v3 M1181 226 l-1 2 M1194 229.6 l1.6 1.6 M1178 236 l2 2.4 M1187 236 l2 2.4" stroke="#333" stroke-width="1.2"/><path d="M1163 249 h3" stroke="#888" stroke-width="0.8"/>
</g>
<rect x="1163.7" y="254.0" width="58.3" height="63.0" fill="#fefefe" />
<rect x="1224.0" y="254.0" width="29.7" height="21.4" fill="#fdfdfd" />
<rect x="1224.0" y="277.0" width="29.7" height="21.0" fill="#fdfdfd" />
<rect x="1224.0" y="300.0" width="29.7" height="17.0" fill="#fdfdfd" />
<path d="M1192.6 300 V317 M1163.7 300 H1222" stroke="#ebebeb" stroke-width="1.2"/>
<g filter="url(#b0)">
<path d="M1210.2 257.6 q-2.2 2.6 0 6.4 M1212 257.4 v7.2 M1215.6 261 h1.4" stroke="#5b8fd0" stroke-width="1.5" fill="none"/>
<path d="M1170.6 278.6 v7 M1170.6 288 v3.6" stroke="#8fb0e0" stroke-width="1.5"/>
<path d="M1180.0 281.6 H1214.0" stroke="#666" stroke-width="0.92" stroke-dasharray="1 2.4 2.2 3 3 1 4 3.4 4 2 1.2 1.4 1 4 3 40" opacity="0.40" fill="none"/>
<circle cx="1206.6" cy="280.4" r="0.9" fill="#333"/><circle cx="1182.6" cy="282" r="0.8" fill="#444"/>
<path d="M1165 305 h3 M1165 308 h3 M1165 311 h3" stroke="#999" stroke-width="0.7"/><path d="M1169 314.6 l4 -1 l3 0.6 l3 -1.6 l3 0.6 l2 -2 l2 1 l1.6 -4 l1 4 l1.4 -2" stroke="#e08a78" stroke-width="1.6" fill="none" opacity=".85"/><path d="M1188.6 306 v9.4" stroke="#777" stroke-width="0.8"/>
<path d="M1188 303 l2.6 -2.4 M1218.4 300.8 l2.4 2" stroke="#7fa6e2" stroke-width="1.6"/>
<path d="M1226 256.6 h6 M1228 259.6 h14 M1227 262.6 h12 M1230 265.6 h18 M1228 268.6 h9 M1231 271.6 h5" stroke="#444" stroke-width="1" opacity=".65" stroke-dasharray="3 1"/>
<path d="M1229 293.5 V290 l1.6 -2.4 l1.6 1.6 l1.6 -2 l1.6 1.2 l1.6 -2.4 l1.6 2 l1.6 -3 l1.6 2.6 l1.6 -1.6 l1.6 -2.6 l1.6 3.4 l1.6 -5 l1.6 1 V293.5 Z" fill="#8fa6e6" opacity=".9"/>
<path d="M1229 306.6 h6 M1229 309 h5 M1241.6 306.6 h7 M1241.6 309 h6" stroke="#7f9ac8" stroke-width="1.3" opacity=".8"/><circle cx="1252" cy="255.6" r="1" fill="#6a90d8"/><circle cx="1252" cy="302" r="1" fill="#6a90d8"/><path d="M1225 278.6 v2" stroke="#666" stroke-width="1"/>
</g>
<rect x="1152.0" y="329.3" width="44.7" height="11.4" fill="#f1f1f1" />
<rect x="1153.5" y="331.9" width="3" height="2" fill="#9ab8e6" opacity=".8"/>
<g filter="url(#b0)">
<rect x="1152.0" y="329.3" width="44.7" height="11.4" fill="none"/>
<path d="M1160.0 331.6 H1186.0" stroke="#333" stroke-width="1.20" stroke-dasharray="3.0 1.3 4.0 1.4 4.8 1.6 2.4 0.9 4.8 0.9 3.1 1.4" opacity="0.60" fill="none"/>
<path d="M1158.0 337.6 H1172.0" stroke="#444" stroke-width="1.10" stroke-dasharray="5.1 1.5 3.1 1.6 3.6 1.0" opacity="0.56" fill="none"/>
</g>
<g filter="url(#b0)"><path d="M1198.6 334.4 h11" stroke="#333" stroke-width="1.6" opacity=".8"/><path d="M1215 331.6 h2 M1221.6 335.6 l2 2.6 l1.4 1.8" stroke="#444" stroke-width="1.2" opacity=".8" fill="none"/></g>
<rect x="1198.7" y="342.7" width="52.3" height="14.6" fill="#f1f1f1" />
<g filter="url(#b0)">
<rect x="1198.7" y="342.7" width="52.3" height="14.6" fill="none"/>
<path d="M1203.0 345.0 H1245.0" stroke="#555" stroke-width="1.01" stroke-dasharray="4.2 1.0 5.6 0.8 3.5 1.4 3.6 0.9 2.7 1.7 5.4 1.0 4.9 0.8 6.5 1.0" opacity="0.48" fill="none"/>
<path d="M1203.0 348.6 H1246.0" stroke="#888" stroke-width="0.83" stroke-dasharray="2.3 1.5 4.6 1.8 4.4 0.9 4.8 1.8 2.9 1.7 6.6 1.7 2.7 1.2 2.4 0.9 3.1 1.6" opacity="0.28" fill="none"/>
<path d="M1203.0 352.6 H1240.0" stroke="#333" stroke-width="1.29" stroke-dasharray="3.7 1.3 5.3 1.0 3.7 1.3 3.4 1.7 5.4 1.7 4.0 1.5 2.1 0.9 4.8 0.8" opacity="0.64" fill="none"/>
</g>
<g clip-path="url(#cpfuji)">
<rect x="1286.0" y="197.0" width="82.0" height="55.7" fill="url(#fuji)" />
<g filter="url(#b1)"><path d="M1300 247 L1316 226 Q1326 214 1330 213.6 Q1336 214 1342 222 L1368 244 V252.7 H1300 Z" fill="#9db5d6"/><path d="M1312 231 L1318 224 Q1326 214.6 1330 213.6 Q1336 214 1342 222 L1347 227 L1340 225 L1335 229 L1329 223.6 L1323 229 L1318 226.6 Z" fill="#f3f6fa"/></g>
<g filter="url(#b0)">
<ellipse cx="1288.3" cy="235.4" rx="2.0" ry="1.5" fill="#8fa474" opacity="0.95"/>
<ellipse cx="1297.3" cy="225.5" rx="2.0" ry="2.5" fill="#a57270" opacity="0.75"/>
<ellipse cx="1299.1" cy="220.9" rx="2.5" ry="1.6" fill="#a86e6c" opacity="0.81"/>
<ellipse cx="1286.6" cy="252.6" rx="2.2" ry="1.3" fill="#b88484" opacity="0.83"/>
<ellipse cx="1293.0" cy="203.5" rx="1.2" ry="2.4" fill="#9c7a72" opacity="0.77"/>
<ellipse cx="1297.3" cy="198.1" rx="2.1" ry="1.7" fill="#a86e6c" opacity="0.87"/>
<ellipse cx="1288.6" cy="199.1" rx="1.3" ry="1.5" fill="#c99896" opacity="0.92"/>
<ellipse cx="1297.2" cy="233.7" rx="1.4" ry="2.0" fill="#c08c8a" opacity="0.96"/>
<ellipse cx="1288.8" cy="248.4" rx="1.9" ry="1.8" fill="#a57270" opacity="0.86"/>
<ellipse cx="1291.4" cy="252.4" rx="1.6" ry="2.5" fill="#b88484" opacity="0.79"/>
<ellipse cx="1296.0" cy="251.7" rx="2.0" ry="2.1" fill="#b07a78" opacity="0.94"/>
<ellipse cx="1289.1" cy="230.9" rx="2.8" ry="1.4" fill="#a57270" opacity="0.92"/>
<ellipse cx="1294.8" cy="243.4" rx="1.8" ry="2.2" fill="#9c7a72" opacity="0.83"/>
<ellipse cx="1287.4" cy="200.7" rx="2.4" ry="1.8" fill="#a86e6c" opacity="0.92"/>
<ellipse cx="1295.5" cy="247.1" rx="1.9" ry="2.8" fill="#c99896" opacity="0.99"/>
<ellipse cx="1294.3" cy="246.2" rx="2.0" ry="2.3" fill="#9aaa7c" opacity="0.98"/>
<ellipse cx="1289.4" cy="228.3" rx="2.5" ry="2.4" fill="#9aaa7c" opacity="0.87"/>
<ellipse cx="1297.7" cy="199.9" rx="2.3" ry="1.3" fill="#8fa474" opacity="0.81"/>
<ellipse cx="1291.5" cy="245.5" rx="2.8" ry="2.4" fill="#a86e6c" opacity="0.87"/>
<ellipse cx="1289.5" cy="250.4" rx="2.7" ry="2.0" fill="#a57270" opacity="0.99"/>
<ellipse cx="1298.6" cy="217.4" rx="2.6" ry="2.2" fill="#a86e6c" opacity="0.86"/>
<ellipse cx="1294.1" cy="244.3" rx="1.4" ry="2.1" fill="#8fa474" opacity="0.78"/>
<ellipse cx="1296.1" cy="218.3" rx="2.7" ry="1.2" fill="#a86e6c" opacity="0.90"/>
<ellipse cx="1295.0" cy="244.4" rx="1.6" ry="1.8" fill="#b88484" opacity="0.99"/>
<ellipse cx="1298.7" cy="204.4" rx="1.8" ry="1.5" fill="#c08c8a" opacity="0.91"/>
<ellipse cx="1297.0" cy="201.0" rx="2.2" ry="1.4" fill="#c08c8a" opacity="0.88"/>
<ellipse cx="1290.5" cy="224.5" rx="2.2" ry="1.5" fill="#c99896" opacity="0.96"/>
<ellipse cx="1288.8" cy="238.5" rx="2.2" ry="2.0" fill="#b07a78" opacity="0.94"/>
<ellipse cx="1286.8" cy="248.8" rx="1.9" ry="1.3" fill="#b88484" opacity="0.94"/>
<ellipse cx="1288.5" cy="236.6" rx="2.7" ry="2.2" fill="#8fa474" opacity="0.94"/>
<ellipse cx="1289.4" cy="205.7" rx="2.5" ry="2.5" fill="#8fa474" opacity="0.87"/>
<ellipse cx="1294.0" cy="227.4" rx="2.0" ry="2.4" fill="#b07a78" opacity="0.99"/>
<ellipse cx="1290.3" cy="236.0" rx="2.4" ry="1.5" fill="#a57270" opacity="0.90"/>
<ellipse cx="1290.6" cy="208.2" rx="1.7" ry="2.8" fill="#c08c8a" opacity="0.78"/>
<ellipse cx="1287.1" cy="201.1" rx="2.0" ry="2.7" fill="#9aaa7c" opacity="0.92"/>
<ellipse cx="1295.9" cy="223.2" rx="1.8" ry="1.8" fill="#a57270" opacity="0.81"/>
<ellipse cx="1286.7" cy="221.2" rx="1.6" ry="2.1" fill="#c99896" opacity="0.85"/>
<ellipse cx="1292.0" cy="241.4" rx="1.8" ry="2.0" fill="#b88484" opacity="0.91"/>
<ellipse cx="1299.5" cy="201.8" rx="1.5" ry="1.8" fill="#9aaa7c" opacity="0.90"/>
<ellipse cx="1289.0" cy="222.1" rx="1.6" ry="2.7" fill="#8fa474" opacity="0.85"/>
<ellipse cx="1294.6" cy="242.9" rx="1.5" ry="1.5" fill="#b07a78" opacity="0.97"/>
<ellipse cx="1296.0" cy="202.1" rx="1.3" ry="1.7" fill="#a86e6c" opacity="0.99"/>
<ellipse cx="1296.4" cy="222.8" rx="2.8" ry="1.5" fill="#c08c8a" opacity="0.86"/>
<ellipse cx="1295.5" cy="217.7" rx="1.6" ry="2.7" fill="#c99896" opacity="0.83"/>
<ellipse cx="1289.6" cy="244.1" rx="2.6" ry="2.0" fill="#a86e6c" opacity="0.81"/>
<ellipse cx="1295.6" cy="236.9" rx="2.7" ry="1.9" fill="#a86e6c" opacity="0.86"/>
<ellipse cx="1294.6" cy="212.6" rx="2.3" ry="2.2" fill="#a86e6c" opacity="0.77"/>
<ellipse cx="1299.7" cy="209.0" rx="2.5" ry="2.7" fill="#9c7a72" opacity="0.93"/>
<ellipse cx="1286.3" cy="224.9" rx="1.8" ry="1.9" fill="#b07a78" opacity="0.86"/>
<ellipse cx="1299.9" cy="249.4" rx="1.4" ry="1.7" fill="#a86e6c" opacity="0.86"/>
<ellipse cx="1298.5" cy="217.6" rx="2.1" ry="2.7" fill="#a86e6c" opacity="0.86"/>
<ellipse cx="1297.8" cy="214.2" rx="1.8" ry="2.1" fill="#b88484" opacity="0.81"/>
<ellipse cx="1297.2" cy="244.0" rx="2.6" ry="1.2" fill="#9aaa7c" opacity="0.90"/>
<ellipse cx="1287.1" cy="247.1" rx="1.4" ry="2.0" fill="#c99896" opacity="0.88"/>
<ellipse cx="1293.5" cy="224.4" rx="1.4" ry="1.4" fill="#9c7a72" opacity="0.82"/>
<ellipse cx="1295.0" cy="197.5" rx="2.3" ry="1.5" fill="#c08c8a" opacity="0.77"/>
<ellipse cx="1297.6" cy="217.1" rx="1.3" ry="1.3" fill="#9c7a72" opacity="0.87"/>
<ellipse cx="1295.5" cy="233.4" rx="1.3" ry="1.6" fill="#a86e6c" opacity="0.84"/>
<ellipse cx="1289.5" cy="208.1" rx="2.4" ry="2.0" fill="#c99896" opacity="0.77"/>
<ellipse cx="1297.6" cy="208.9" rx="2.4" ry="2.2" fill="#b07a78" opacity="0.91"/>
<ellipse cx="1295.0" cy="198.2" rx="2.0" ry="1.5" fill="#9c7a72" opacity="0.96"/>
<ellipse cx="1297.3" cy="247.5" rx="1.5" ry="2.4" fill="#b07a78" opacity="0.98"/>
<ellipse cx="1293.5" cy="247.6" rx="1.8" ry="2.7" fill="#8fa474" opacity="0.98"/>
<ellipse cx="1297.1" cy="197.6" rx="1.5" ry="1.6" fill="#9c7a72" opacity="0.76"/>
<ellipse cx="1291.3" cy="238.7" rx="2.7" ry="2.1" fill="#a86e6c" opacity="0.97"/>
<ellipse cx="1288.9" cy="252.6" rx="1.7" ry="1.9" fill="#a57270" opacity="0.94"/>
<ellipse cx="1299.4" cy="247.7" rx="1.8" ry="1.5" fill="#c99896" opacity="0.88"/>
<ellipse cx="1297.4" cy="217.2" rx="2.8" ry="2.7" fill="#a86e6c" opacity="0.99"/>
<ellipse cx="1296.6" cy="251.8" rx="2.4" ry="1.5" fill="#c99896" opacity="0.88"/>
<ellipse cx="1291.2" cy="252.2" rx="1.4" ry="1.6" fill="#8fa474" opacity="0.86"/>
<ellipse cx="1305.7" cy="234.0" rx="2.2" ry="1.6" fill="#c99896" opacity="0.86"/>
<ellipse cx="1302.5" cy="226.7" rx="1.3" ry="2.6" fill="#8fa474" opacity="0.80"/>
<ellipse cx="1307.5" cy="222.7" rx="2.5" ry="2.4" fill="#9aaa7c" opacity="0.93"/>
<ellipse cx="1309.9" cy="223.8" rx="1.3" ry="2.4" fill="#b88484" opacity="0.97"/>
<ellipse cx="1301.6" cy="235.6" rx="1.5" ry="1.6" fill="#9aaa7c" opacity="0.93"/>
<ellipse cx="1307.7" cy="226.6" rx="1.2" ry="2.7" fill="#b07a78" opacity="0.78"/>
<ellipse cx="1302.0" cy="223.2" rx="2.2" ry="2.3" fill="#9aaa7c" opacity="0.97"/>
<ellipse cx="1307.0" cy="223.7" rx="2.4" ry="1.9" fill="#8fa474" opacity="0.78"/>
<ellipse cx="1308.7" cy="229.5" rx="2.6" ry="1.3" fill="#9c7a72" opacity="0.83"/>
<ellipse cx="1305.6" cy="217.8" rx="1.4" ry="2.2" fill="#8fa474" opacity="0.91"/>
<ellipse cx="1304.2" cy="217.5" rx="1.5" ry="2.3" fill="#9aaa7c" opacity="0.83"/>
<ellipse cx="1305.8" cy="223.6" rx="2.5" ry="1.7" fill="#c99896" opacity="0.82"/>
<ellipse cx="1307.9" cy="215.6" rx="1.2" ry="2.4" fill="#a57270" opacity="0.90"/>
<ellipse cx="1303.3" cy="227.0" rx="1.8" ry="2.2" fill="#a57270" opacity="0.91"/>
<ellipse cx="1302.4" cy="223.0" rx="2.2" ry="1.9" fill="#9aaa7c" opacity="0.88"/>
<ellipse cx="1300.7" cy="234.5" rx="2.6" ry="2.6" fill="#b07a78" opacity="0.96"/>
<ellipse cx="1307.3" cy="237.5" rx="1.8" ry="1.4" fill="#c08c8a" opacity="0.75"/>
<ellipse cx="1301.3" cy="232.0" rx="1.5" ry="1.3" fill="#8fa474" opacity="0.80"/>
<ellipse cx="1299.8" cy="230.2" rx="1.6" ry="1.4" fill="#a86e6c" opacity="0.88"/>
<ellipse cx="1299.4" cy="224.5" rx="1.5" ry="2.3" fill="#c08c8a" opacity="0.88"/>
<ellipse cx="1299.0" cy="220.3" rx="1.6" ry="1.9" fill="#c08c8a" opacity="0.95"/>
<ellipse cx="1309.1" cy="232.2" rx="1.8" ry="2.7" fill="#b07a78" opacity="0.95"/>
<ellipse cx="1306.2" cy="237.0" rx="1.3" ry="2.0" fill="#b88484" opacity="0.97"/>
<ellipse cx="1307.3" cy="229.1" rx="1.3" ry="2.2" fill="#a86e6c" opacity="0.94"/>
<ellipse cx="1301.1" cy="226.3" rx="2.0" ry="1.5" fill="#8fa474" opacity="0.84"/>
<ellipse cx="1306.0" cy="231.1" rx="2.7" ry="1.7" fill="#b88484" opacity="0.78"/>
<ellipse cx="1305.0" cy="226.7" rx="2.4" ry="1.4" fill="#a86e6c" opacity="0.83"/>
<ellipse cx="1299.3" cy="231.2" rx="2.7" ry="1.3" fill="#9aaa7c" opacity="0.94"/>
<ellipse cx="1307.9" cy="227.3" rx="2.2" ry="2.0" fill="#c08c8a" opacity="0.89"/>
<ellipse cx="1302.4" cy="219.2" rx="2.2" ry="2.2" fill="#9aaa7c" opacity="0.86"/>
<ellipse cx="1351.5" cy="243.2" rx="1.5" ry="1.3" fill="#a57270" opacity="0.80"/>
<ellipse cx="1358.5" cy="246.3" rx="2.6" ry="2.7" fill="#c99896" opacity="0.81"/>
<ellipse cx="1321.5" cy="251.2" rx="1.6" ry="2.2" fill="#c99896" opacity="0.96"/>
<ellipse cx="1345.8" cy="247.7" rx="1.8" ry="2.6" fill="#9c7a72" opacity="0.91"/>
<ellipse cx="1316.7" cy="250.3" rx="2.6" ry="1.6" fill="#c08c8a" opacity="1.00"/>
<ellipse cx="1319.6" cy="246.7" rx="2.4" ry="1.2" fill="#a86e6c" opacity="0.89"/>
<ellipse cx="1362.0" cy="245.1" rx="2.5" ry="2.6" fill="#c99896" opacity="0.97"/>
<ellipse cx="1355.3" cy="252.5" rx="2.2" ry="2.3" fill="#9aaa7c" opacity="0.80"/>
<ellipse cx="1308.0" cy="251.8" rx="2.3" ry="1.7" fill="#b88484" opacity="0.78"/>
<ellipse cx="1323.8" cy="244.3" rx="2.4" ry="1.5" fill="#b07a78" opacity="0.78"/>
<ellipse cx="1330.1" cy="243.7" rx="1.4" ry="2.0" fill="#9c7a72" opacity="0.82"/>
<ellipse cx="1328.1" cy="249.9" rx="2.4" ry="2.7" fill="#b88484" opacity="0.89"/>
<ellipse cx="1316.1" cy="243.1" rx="2.5" ry="2.8" fill="#b88484" opacity="0.81"/>
<ellipse cx="1341.0" cy="246.0" rx="2.6" ry="1.4" fill="#8fa474" opacity="0.84"/>
<ellipse cx="1363.4" cy="246.4" rx="2.5" ry="1.6" fill="#a86e6c" opacity="0.95"/>
<ellipse cx="1296.3" cy="246.3" rx="2.5" ry="2.3" fill="#a86e6c" opacity="0.88"/>
<ellipse cx="1299.0" cy="243.3" rx="2.1" ry="2.1" fill="#9c7a72" opacity="0.96"/>
<ellipse cx="1357.0" cy="249.0" rx="2.2" ry="1.5" fill="#a86e6c" opacity="0.79"/>
<ellipse cx="1348.7" cy="247.0" rx="1.5" ry="1.8" fill="#9c7a72" opacity="0.95"/>
<ellipse cx="1357.6" cy="250.2" rx="1.6" ry="1.7" fill="#b07a78" opacity="0.83"/>
<ellipse cx="1327.2" cy="251.5" rx="2.2" ry="2.6" fill="#c08c8a" opacity="0.87"/>
<ellipse cx="1347.2" cy="252.1" rx="1.5" ry="2.2" fill="#a86e6c" opacity="1.00"/>
<ellipse cx="1359.4" cy="251.8" rx="2.6" ry="2.1" fill="#c08c8a" opacity="0.98"/>
<ellipse cx="1363.2" cy="250.9" rx="2.2" ry="1.2" fill="#c08c8a" opacity="0.94"/>
<ellipse cx="1367.1" cy="248.1" rx="2.2" ry="1.3" fill="#b07a78" opacity="0.99"/>
<ellipse cx="1365.5" cy="247.3" rx="1.8" ry="2.2" fill="#b88484" opacity="0.85"/>
<ellipse cx="1327.7" cy="250.3" rx="2.1" ry="2.2" fill="#a86e6c" opacity="0.99"/>
<ellipse cx="1317.7" cy="252.0" rx="1.5" ry="1.9" fill="#a86e6c" opacity="0.83"/>
<ellipse cx="1314.8" cy="246.4" rx="2.4" ry="1.8" fill="#a57270" opacity="0.88"/>
<ellipse cx="1361.6" cy="249.2" rx="1.9" ry="2.0" fill="#c99896" opacity="0.88"/>
<ellipse cx="1313.4" cy="248.3" rx="2.4" ry="2.3" fill="#8fa474" opacity="0.83"/>
<ellipse cx="1340.3" cy="250.2" rx="1.9" ry="1.6" fill="#a57270" opacity="0.97"/>
<ellipse cx="1358.6" cy="245.0" rx="2.8" ry="2.0" fill="#a86e6c" opacity="0.98"/>
<ellipse cx="1302.8" cy="250.0" rx="2.5" ry="2.0" fill="#8fa474" opacity="0.90"/>
<ellipse cx="1315.5" cy="247.9" rx="2.6" ry="2.2" fill="#c08c8a" opacity="0.91"/>
<ellipse cx="1304.3" cy="245.8" rx="1.5" ry="2.1" fill="#c08c8a" opacity="0.92"/>
<ellipse cx="1332.8" cy="248.4" rx="2.2" ry="2.3" fill="#c99896" opacity="1.00"/>
<ellipse cx="1357.0" cy="246.8" rx="1.9" ry="1.2" fill="#a86e6c" opacity="0.82"/>
<ellipse cx="1323.1" cy="244.9" rx="2.7" ry="2.2" fill="#8fa474" opacity="0.96"/>
<ellipse cx="1331.4" cy="248.7" rx="1.3" ry="1.8" fill="#c99896" opacity="0.84"/>
<ellipse cx="1320.6" cy="247.1" rx="1.6" ry="1.5" fill="#b07a78" opacity="0.97"/>
<ellipse cx="1358.2" cy="244.0" rx="1.5" ry="2.1" fill="#c99896" opacity="0.83"/>
<ellipse cx="1333.9" cy="251.9" rx="1.3" ry="1.3" fill="#c08c8a" opacity="0.92"/>
<ellipse cx="1355.5" cy="248.5" rx="1.5" ry="1.8" fill="#a86e6c" opacity="0.96"/>
<ellipse cx="1329.4" cy="243.4" rx="1.4" ry="2.7" fill="#a86e6c" opacity="0.85"/>
<ellipse cx="1341.1" cy="244.6" rx="1.7" ry="2.3" fill="#b88484" opacity="0.80"/>
<ellipse cx="1333.0" cy="244.7" rx="2.8" ry="1.3" fill="#c08c8a" opacity="0.99"/>
<ellipse cx="1353.6" cy="246.3" rx="2.5" ry="2.0" fill="#b88484" opacity="0.77"/>
<ellipse cx="1348.4" cy="246.9" rx="2.1" ry="1.4" fill="#a57270" opacity="0.88"/>
<ellipse cx="1302.4" cy="251.2" rx="1.8" ry="2.2" fill="#9aaa7c" opacity="0.95"/>
<ellipse cx="1350.8" cy="251.6" rx="1.9" ry="2.2" fill="#b07a78" opacity="0.76"/>
<ellipse cx="1353.2" cy="249.9" rx="1.6" ry="1.6" fill="#8fa474" opacity="0.89"/>
<ellipse cx="1336.3" cy="245.3" rx="1.8" ry="1.7" fill="#b88484" opacity="0.99"/>
<ellipse cx="1361.1" cy="244.8" rx="2.5" ry="1.7" fill="#9c7a72" opacity="0.96"/>
<ellipse cx="1345.3" cy="243.3" rx="2.8" ry="1.3" fill="#c08c8a" opacity="0.78"/>
<ellipse cx="1331.9" cy="249.3" rx="2.5" ry="2.8" fill="#9c7a72" opacity="0.83"/>
<ellipse cx="1312.4" cy="245.5" rx="1.5" ry="2.4" fill="#a86e6c" opacity="0.77"/>
<ellipse cx="1322.8" cy="246.9" rx="2.7" ry="2.0" fill="#a57270" opacity="0.87"/>
<ellipse cx="1361.1" cy="250.3" rx="1.3" ry="2.2" fill="#a86e6c" opacity="0.99"/>
<ellipse cx="1347.5" cy="252.1" rx="1.9" ry="1.6" fill="#c99896" opacity="0.82"/>
<ellipse cx="1310.8" cy="244.6" rx="1.3" ry="2.2" fill="#c99896" opacity="0.90"/>
<ellipse cx="1349.0" cy="248.5" rx="1.7" ry="1.3" fill="#b88484" opacity="0.90"/>
<ellipse cx="1315.4" cy="252.6" rx="2.3" ry="2.5" fill="#b07a78" opacity="0.81"/>
<ellipse cx="1330.9" cy="246.7" rx="1.3" ry="2.8" fill="#9c7a72" opacity="0.94"/>
<ellipse cx="1315.6" cy="243.2" rx="1.3" ry="2.0" fill="#a86e6c" opacity="0.99"/>
<ellipse cx="1323.9" cy="252.2" rx="2.3" ry="2.7" fill="#9aaa7c" opacity="0.90"/>
<ellipse cx="1315.4" cy="249.1" rx="1.6" ry="1.7" fill="#b07a78" opacity="0.80"/>
<ellipse cx="1299.0" cy="252.3" rx="2.1" ry="2.5" fill="#a86e6c" opacity="0.88"/>
<ellipse cx="1307.6" cy="249.0" rx="2.5" ry="2.8" fill="#c99896" opacity="0.81"/>
<ellipse cx="1346.0" cy="250.6" rx="1.8" ry="2.0" fill="#a57270" opacity="0.95"/>
<ellipse cx="1314.1" cy="247.7" rx="1.6" ry="2.3" fill="#9c7a72" opacity="0.80"/>
<ellipse cx="1307.3" cy="247.6" rx="2.7" ry="1.5" fill="#b88484" opacity="0.88"/>
<ellipse cx="1330.6" cy="245.5" rx="1.4" ry="1.6" fill="#c08c8a" opacity="0.76"/>
<ellipse cx="1342.3" cy="249.4" rx="2.0" ry="2.2" fill="#c99896" opacity="0.96"/>
<ellipse cx="1310.6" cy="246.6" rx="1.7" ry="2.6" fill="#9aaa7c" opacity="0.78"/>
<ellipse cx="1321.0" cy="247.1" rx="1.7" ry="1.8" fill="#8fa474" opacity="0.80"/>
<ellipse cx="1355.0" cy="244.8" rx="2.6" ry="1.3" fill="#9c7a72" opacity="0.95"/>
<ellipse cx="1313.7" cy="245.5" rx="2.1" ry="1.9" fill="#a57270" opacity="0.91"/>
<ellipse cx="1318.7" cy="244.5" rx="2.4" ry="1.3" fill="#b07a78" opacity="0.76"/>
<ellipse cx="1329.2" cy="247.8" rx="1.9" ry="2.0" fill="#b88484" opacity="0.96"/>
<ellipse cx="1333.4" cy="247.2" rx="1.4" ry="2.6" fill="#c99896" opacity="0.88"/>
<ellipse cx="1299.1" cy="247.7" rx="2.8" ry="1.9" fill="#a57270" opacity="0.82"/>
<ellipse cx="1363.4" cy="245.8" rx="1.6" ry="1.7" fill="#b07a78" opacity="0.96"/>
<ellipse cx="1309.4" cy="246.2" rx="2.4" ry="1.8" fill="#9aaa7c" opacity="0.79"/>
<ellipse cx="1347.2" cy="247.2" rx="1.6" ry="2.2" fill="#9aaa7c" opacity="0.80"/>
<ellipse cx="1339.4" cy="245.4" rx="2.6" ry="1.3" fill="#9aaa7c" opacity="0.79"/>
<ellipse cx="1321.4" cy="244.5" rx="2.4" ry="2.6" fill="#9aaa7c" opacity="0.89"/>
<ellipse cx="1367.6" cy="247.6" rx="1.3" ry="1.8" fill="#9c7a72" opacity="0.89"/>
<ellipse cx="1354.9" cy="248.1" rx="1.8" ry="2.3" fill="#9c7a72" opacity="0.95"/>
<ellipse cx="1339.2" cy="243.2" rx="1.8" ry="1.9" fill="#b07a78" opacity="0.95"/>
<ellipse cx="1366.0" cy="208.7" rx="1.2" ry="1.6" fill="#c08c8a" opacity="0.92"/>
<ellipse cx="1361.2" cy="213.6" rx="1.5" ry="1.5" fill="#b88484" opacity="0.86"/>
<ellipse cx="1362.8" cy="210.3" rx="1.9" ry="1.3" fill="#9aaa7c" opacity="0.87"/>
<ellipse cx="1361.2" cy="207.0" rx="2.4" ry="2.6" fill="#a86e6c" opacity="1.00"/>
<ellipse cx="1362.8" cy="208.0" rx="1.4" ry="1.5" fill="#9c7a72" opacity="0.94"/>
<ellipse cx="1367.0" cy="209.9" rx="1.4" ry="1.5" fill="#a57270" opacity="0.84"/>
<ellipse cx="1360.8" cy="209.2" rx="2.4" ry="2.1" fill="#8fa474" opacity="0.86"/>
<ellipse cx="1367.3" cy="197.7" rx="2.8" ry="1.4" fill="#c99896" opacity="0.97"/>
<ellipse cx="1363.6" cy="204.8" rx="1.7" ry="2.3" fill="#c08c8a" opacity="0.88"/>
<ellipse cx="1360.6" cy="207.7" rx="2.2" ry="1.3" fill="#c08c8a" opacity="0.81"/>
<ellipse cx="1359.2" cy="204.2" rx="2.6" ry="1.8" fill="#c08c8a" opacity="0.96"/>
<ellipse cx="1357.8" cy="206.4" rx="1.2" ry="2.6" fill="#b88484" opacity="0.92"/>
<ellipse cx="1357.7" cy="202.3" rx="1.9" ry="1.4" fill="#c08c8a" opacity="0.84"/>
<ellipse cx="1358.4" cy="209.4" rx="1.9" ry="2.2" fill="#a86e6c" opacity="0.95"/>
<ellipse cx="1362.1" cy="201.4" rx="1.4" ry="2.8" fill="#a86e6c" opacity="0.84"/>
<ellipse cx="1361.2" cy="201.8" rx="2.2" ry="2.6" fill="#9c7a72" opacity="0.95"/>
<ellipse cx="1358.6" cy="200.9" rx="2.0" ry="1.7" fill="#a57270" opacity="0.87"/>
<ellipse cx="1356.8" cy="202.2" rx="2.6" ry="1.4" fill="#b88484" opacity="0.90"/>
<ellipse cx="1356.3" cy="211.8" rx="1.6" ry="1.8" fill="#a57270" opacity="0.85"/>
<ellipse cx="1361.3" cy="199.7" rx="1.3" ry="2.5" fill="#c99896" opacity="0.86"/>
<ellipse cx="1364.7" cy="199.1" rx="2.2" ry="1.6" fill="#8fa474" opacity="0.80"/>
<ellipse cx="1363.7" cy="198.7" rx="1.2" ry="2.8" fill="#c99896" opacity="0.83"/>
<ellipse cx="1356.5" cy="204.9" rx="2.1" ry="1.7" fill="#c08c8a" opacity="0.88"/>
<ellipse cx="1362.1" cy="213.9" rx="1.7" ry="2.7" fill="#c99896" opacity="0.95"/>
<ellipse cx="1356.0" cy="209.3" rx="2.7" ry="2.8" fill="#9aaa7c" opacity="0.78"/>
<ellipse cx="1356.3" cy="211.1" rx="2.0" ry="2.6" fill="#c99896" opacity="0.95"/>
<ellipse cx="1358.4" cy="210.6" rx="1.5" ry="2.6" fill="#8fa474" opacity="0.95"/>
<ellipse cx="1357.7" cy="213.4" rx="2.5" ry="1.5" fill="#9c7a72" opacity="0.85"/>
<ellipse cx="1362.1" cy="212.4" rx="1.4" ry="1.6" fill="#a57270" opacity="0.89"/>
<ellipse cx="1357.0" cy="198.8" rx="1.8" ry="1.6" fill="#a86e6c" opacity="0.88"/>
<ellipse cx="1365.6" cy="227.8" rx="1.5" ry="1.8" fill="#9aaa7c" opacity="0.90"/>
<ellipse cx="1360.5" cy="216.2" rx="1.2" ry="2.5" fill="#a86e6c" opacity="0.80"/>
<ellipse cx="1363.3" cy="221.8" rx="2.4" ry="2.7" fill="#a57270" opacity="0.93"/>
<ellipse cx="1364.2" cy="226.8" rx="2.3" ry="2.4" fill="#9c7a72" opacity="0.75"/>
<ellipse cx="1357.2" cy="231.2" rx="1.9" ry="1.4" fill="#b88484" opacity="0.88"/>
<ellipse cx="1358.0" cy="222.5" rx="2.7" ry="1.9" fill="#b07a78" opacity="0.93"/>
<ellipse cx="1360.6" cy="217.6" rx="1.2" ry="1.4" fill="#c99896" opacity="1.00"/>
<ellipse cx="1357.3" cy="230.3" rx="2.2" ry="2.7" fill="#9aaa7c" opacity="0.98"/>
<ellipse cx="1360.6" cy="224.3" rx="2.3" ry="2.5" fill="#b88484" opacity="0.79"/>
<ellipse cx="1365.5" cy="218.1" rx="2.1" ry="2.1" fill="#c99896" opacity="0.77"/>
<ellipse cx="1359.2" cy="223.1" rx="2.3" ry="1.3" fill="#c99896" opacity="0.77"/>
<ellipse cx="1359.0" cy="223.5" rx="2.7" ry="1.6" fill="#b07a78" opacity="0.88"/>
<ellipse cx="1360.8" cy="231.8" rx="1.4" ry="1.3" fill="#a86e6c" opacity="0.86"/>
<ellipse cx="1365.9" cy="216.2" rx="2.8" ry="1.4" fill="#a86e6c" opacity="0.99"/>
<ellipse cx="1365.7" cy="225.0" rx="2.2" ry="1.3" fill="#c08c8a" opacity="0.86"/>
<ellipse cx="1359.5" cy="219.4" rx="1.6" ry="2.4" fill="#c08c8a" opacity="0.98"/>
<ellipse cx="1363.6" cy="233.0" rx="2.3" ry="2.0" fill="#8fa474" opacity="0.81"/>
<ellipse cx="1365.3" cy="216.1" rx="1.7" ry="2.6" fill="#b88484" opacity="0.90"/>
<ellipse cx="1361.1" cy="220.3" rx="2.7" ry="2.6" fill="#9c7a72" opacity="0.92"/>
<ellipse cx="1360.0" cy="228.1" rx="2.2" ry="2.1" fill="#9c7a72" opacity="0.87"/>
<ellipse cx="1300.5" cy="209.1" rx="1.5" ry="1.7" fill="#a86e6c" opacity="0.77"/>
<ellipse cx="1304.0" cy="201.6" rx="2.0" ry="2.1" fill="#8fa474" opacity="0.77"/>
<ellipse cx="1306.7" cy="203.9" rx="2.2" ry="2.0" fill="#c99896" opacity="0.84"/>
<ellipse cx="1309.7" cy="205.9" rx="1.3" ry="2.5" fill="#a86e6c" opacity="0.76"/>
<ellipse cx="1310.7" cy="201.9" rx="1.8" ry="1.9" fill="#9aaa7c" opacity="0.89"/>
<ellipse cx="1310.3" cy="201.8" rx="2.5" ry="1.6" fill="#b07a78" opacity="0.83"/>
<ellipse cx="1310.5" cy="208.8" rx="1.8" ry="1.7" fill="#c99896" opacity="0.78"/>
<ellipse cx="1310.0" cy="200.5" rx="1.3" ry="1.5" fill="#a86e6c" opacity="0.90"/>
<ellipse cx="1304.3" cy="201.2" rx="2.3" ry="2.6" fill="#8fa474" opacity="0.77"/>
<ellipse cx="1305.6" cy="209.8" rx="2.1" ry="1.7" fill="#a86e6c" opacity="0.80"/>
<ellipse cx="1304.5" cy="207.4" rx="2.2" ry="2.4" fill="#9aaa7c" opacity="0.86"/>
<ellipse cx="1300.5" cy="205.5" rx="1.7" ry="2.4" fill="#c08c8a" opacity="0.87"/>
<ellipse cx="1302.7" cy="207.0" rx="1.5" ry="1.8" fill="#a86e6c" opacity="0.95"/>
<ellipse cx="1306.8" cy="201.9" rx="2.5" ry="1.8" fill="#a57270" opacity="0.97"/>
</g>
</g></g>
<g clip-path="url(#cpgar)">
<rect x="1378.3" y="200.0" width="66.0" height="45.0" fill="#93ac6c" />
<g filter="url(#b1)">
<ellipse cx="1405" cy="209" rx="22" ry="8" fill="#d8a4a0"/>
<ellipse cx="1428" cy="214" rx="12" ry="8" fill="#dc9a9a"/>
<ellipse cx="1392" cy="206" rx="8" ry="5" fill="#b9c78a"/>
<ellipse cx="1438" cy="203" rx="8" ry="5" fill="#f4f4f4"/>
<ellipse cx="1440" cy="224" rx="5" ry="10" fill="#d49a98"/>
<ellipse cx="1400" cy="223" rx="16" ry="4" fill="#7c9062"/>
<ellipse cx="1420" cy="229" rx="12" ry="4" fill="#6f8858"/>
<ellipse cx="1388" cy="233" rx="8" ry="9" fill="#cfd2ce"/>
<ellipse cx="1395" cy="238" rx="4" ry="4" fill="#7e847a"/>
<ellipse cx="1430" cy="240" rx="10" ry="5" fill="#a9d070"/>
<ellipse cx="1442" cy="240" rx="4" ry="6" fill="#d5dcec"/>
<ellipse cx="1412" cy="240" rx="10" ry="5" fill="#8aae5e"/>
<ellipse cx="1382" cy="218" rx="4" ry="10" fill="#a8b890"/>
<ellipse cx="1416" cy="218" rx="6" ry="3" fill="#c79a84"/>
</g><g filter="url(#b0)">
<ellipse cx="1419.9" cy="219.5" rx="2.1" ry="1.9" fill="#e8bcb8" opacity=".8"/>
<ellipse cx="1439.0" cy="201.7" rx="1.9" ry="1.3" fill="#d89694" opacity=".8"/>
<ellipse cx="1383.3" cy="204.9" rx="1.6" ry="1.3" fill="#b9c48c" opacity=".8"/>
<ellipse cx="1414.8" cy="215.3" rx="1.9" ry="1.5" fill="#c98686" opacity=".8"/>
<ellipse cx="1391.7" cy="222.7" rx="1.2" ry="2.0" fill="#d89694" opacity=".8"/>
<ellipse cx="1388.9" cy="216.4" rx="1.2" ry="2.2" fill="#e0aaa8" opacity=".8"/>
<ellipse cx="1380.3" cy="220.3" rx="2.0" ry="1.3" fill="#e0aaa8" opacity=".8"/>
<ellipse cx="1441.5" cy="214.5" rx="1.8" ry="1.2" fill="#e8bcb8" opacity=".8"/>
<ellipse cx="1442.0" cy="205.9" rx="1.4" ry="1.4" fill="#d89694" opacity=".8"/>
<ellipse cx="1390.6" cy="204.6" rx="1.4" ry="2.0" fill="#c98686" opacity=".8"/>
<ellipse cx="1417.5" cy="215.9" rx="1.4" ry="1.4" fill="#e8bcb8" opacity=".8"/>
<ellipse cx="1432.4" cy="213.0" rx="1.2" ry="1.6" fill="#b9c48c" opacity=".8"/>
<ellipse cx="1391.3" cy="207.4" rx="2.1" ry="1.4" fill="#c98686" opacity=".8"/>
<ellipse cx="1405.9" cy="214.7" rx="1.4" ry="1.7" fill="#d89694" opacity=".8"/>
<ellipse cx="1380.6" cy="202.2" rx="1.7" ry="2.1" fill="#e0aaa8" opacity=".8"/>
<ellipse cx="1387.6" cy="207.2" rx="1.4" ry="1.4" fill="#d89694" opacity=".8"/>
<ellipse cx="1413.6" cy="220.4" rx="1.7" ry="1.9" fill="#c98686" opacity=".8"/>
<ellipse cx="1403.5" cy="208.4" rx="2.1" ry="1.1" fill="#d89694" opacity=".8"/>
<ellipse cx="1401.8" cy="216.3" rx="1.4" ry="2.1" fill="#e0aaa8" opacity=".8"/>
<ellipse cx="1414.9" cy="208.8" rx="1.4" ry="2.0" fill="#b9c48c" opacity=".8"/>
<ellipse cx="1420.1" cy="219.0" rx="2.2" ry="1.2" fill="#b9c48c" opacity=".8"/>
<ellipse cx="1383.1" cy="225.7" rx="2.1" ry="1.0" fill="#9cb070" opacity=".8"/>
<ellipse cx="1427.4" cy="209.6" rx="1.5" ry="1.5" fill="#b9c48c" opacity=".8"/>
<ellipse cx="1383.6" cy="223.9" rx="2.0" ry="1.4" fill="#c98686" opacity=".8"/>
<ellipse cx="1393.3" cy="225.5" rx="2.1" ry="1.8" fill="#9cb070" opacity=".8"/>
<ellipse cx="1430.4" cy="203.7" rx="1.4" ry="1.1" fill="#d89694" opacity=".8"/>
<ellipse cx="1406.9" cy="204.5" rx="2.0" ry="2.2" fill="#9cb070" opacity=".8"/>
<ellipse cx="1409.0" cy="213.2" rx="1.4" ry="1.3" fill="#e8bcb8" opacity=".8"/>
<ellipse cx="1410.1" cy="223.5" rx="1.5" ry="2.2" fill="#c98686" opacity=".8"/>
<ellipse cx="1441.4" cy="216.7" rx="2.0" ry="1.2" fill="#d89694" opacity=".8"/>
<ellipse cx="1411.5" cy="213.9" rx="2.0" ry="1.4" fill="#9cb070" opacity=".8"/>
<ellipse cx="1430.3" cy="220.4" rx="1.7" ry="1.0" fill="#e8bcb8" opacity=".8"/>
<ellipse cx="1399.6" cy="215.0" rx="1.3" ry="1.6" fill="#e8bcb8" opacity=".8"/>
<ellipse cx="1429.3" cy="218.3" rx="2.1" ry="1.4" fill="#b9c48c" opacity=".8"/>
<ellipse cx="1391.4" cy="222.3" rx="1.7" ry="1.3" fill="#d89694" opacity=".8"/>
<ellipse cx="1423.0" cy="212.6" rx="1.8" ry="2.0" fill="#9cb070" opacity=".8"/>
<ellipse cx="1402.3" cy="217.1" rx="2.1" ry="1.5" fill="#e8bcb8" opacity=".8"/>
<ellipse cx="1439.0" cy="205.3" rx="1.5" ry="1.4" fill="#e8bcb8" opacity=".8"/>
<ellipse cx="1401.4" cy="204.5" rx="1.2" ry="1.4" fill="#e0aaa8" opacity=".8"/>
<ellipse cx="1434.6" cy="208.1" rx="1.9" ry="1.9" fill="#c98686" opacity=".8"/>
<ellipse cx="1391.0" cy="220.5" rx="1.6" ry="2.1" fill="#9cb070" opacity=".8"/>
<ellipse cx="1399.4" cy="214.8" rx="1.3" ry="2.2" fill="#e8bcb8" opacity=".8"/>
<ellipse cx="1392.5" cy="215.7" rx="1.8" ry="1.3" fill="#9cb070" opacity=".8"/>
<ellipse cx="1423.9" cy="216.8" rx="2.2" ry="2.2" fill="#c98686" opacity=".8"/>
<ellipse cx="1390.6" cy="223.3" rx="1.4" ry="1.2" fill="#c98686" opacity=".8"/>
<ellipse cx="1392.4" cy="201.9" rx="1.4" ry="1.8" fill="#d89694" opacity=".8"/>
<ellipse cx="1384.6" cy="206.1" rx="2.1" ry="1.0" fill="#e8bcb8" opacity=".8"/>
<ellipse cx="1405.9" cy="208.0" rx="2.0" ry="1.8" fill="#d89694" opacity=".8"/>
<ellipse cx="1415.0" cy="225.1" rx="1.7" ry="1.1" fill="#9cb070" opacity=".8"/>
<ellipse cx="1414.9" cy="209.5" rx="1.4" ry="1.4" fill="#9cb070" opacity=".8"/>
<ellipse cx="1388.3" cy="211.2" rx="1.8" ry="1.4" fill="#9cb070" opacity=".8"/>
<ellipse cx="1389.1" cy="215.9" rx="1.6" ry="1.2" fill="#9cb070" opacity=".8"/>
<ellipse cx="1388.5" cy="203.3" rx="1.0" ry="1.1" fill="#e8bcb8" opacity=".8"/>
<ellipse cx="1416.2" cy="216.4" rx="1.4" ry="2.1" fill="#e0aaa8" opacity=".8"/>
<ellipse cx="1416.1" cy="211.7" rx="1.6" ry="1.6" fill="#e0aaa8" opacity=".8"/>
<ellipse cx="1425.3" cy="210.6" rx="1.7" ry="1.3" fill="#e0aaa8" opacity=".8"/>
<ellipse cx="1442.8" cy="213.4" rx="1.0" ry="2.1" fill="#d89694" opacity=".8"/>
<ellipse cx="1399.7" cy="224.2" rx="1.6" ry="1.1" fill="#e0aaa8" opacity=".8"/>
<ellipse cx="1419.8" cy="212.1" rx="1.0" ry="1.2" fill="#b9c48c" opacity=".8"/>
<ellipse cx="1405.1" cy="213.0" rx="1.3" ry="2.1" fill="#9cb070" opacity=".8"/>
<ellipse cx="1430.0" cy="207.1" rx="2.0" ry="1.9" fill="#b9c48c" opacity=".8"/>
<ellipse cx="1398.3" cy="213.3" rx="1.6" ry="2.0" fill="#d89694" opacity=".8"/>
<ellipse cx="1436.4" cy="223.4" rx="1.9" ry="1.4" fill="#c98686" opacity=".8"/>
<ellipse cx="1414.1" cy="209.4" rx="1.9" ry="1.0" fill="#b9c48c" opacity=".8"/>
<ellipse cx="1402.4" cy="218.0" rx="1.2" ry="1.0" fill="#9cb070" opacity=".8"/>
<ellipse cx="1415.4" cy="218.1" rx="2.1" ry="1.7" fill="#c98686" opacity=".8"/>
<ellipse cx="1380.9" cy="220.5" rx="1.7" ry="1.8" fill="#d89694" opacity=".8"/>
<ellipse cx="1441.0" cy="217.2" rx="1.6" ry="1.8" fill="#d89694" opacity=".8"/>
<ellipse cx="1426.1" cy="223.5" rx="2.0" ry="1.1" fill="#d89694" opacity=".8"/>
<ellipse cx="1433.5" cy="218.4" rx="1.7" ry="1.8" fill="#d89694" opacity=".8"/>
<ellipse cx="1410.2" cy="208.8" rx="1.6" ry="1.7" fill="#e0aaa8" opacity=".8"/>
<ellipse cx="1411.9" cy="209.3" rx="1.5" ry="1.6" fill="#e0aaa8" opacity=".8"/>
<ellipse cx="1383.1" cy="219.3" rx="2.0" ry="2.0" fill="#b9c48c" opacity=".8"/>
<ellipse cx="1422.5" cy="201.6" rx="1.5" ry="1.1" fill="#e8bcb8" opacity=".8"/>
<ellipse cx="1405.9" cy="213.2" rx="2.0" ry="1.3" fill="#c98686" opacity=".8"/>
<ellipse cx="1421.3" cy="224.8" rx="2.1" ry="2.2" fill="#e8bcb8" opacity=".8"/>
<ellipse cx="1425.2" cy="211.9" rx="1.7" ry="1.5" fill="#e0aaa8" opacity=".8"/>
<ellipse cx="1390.3" cy="216.6" rx="1.7" ry="1.8" fill="#c98686" opacity=".8"/>
<ellipse cx="1427.7" cy="208.0" rx="1.7" ry="1.9" fill="#9cb070" opacity=".8"/>
<ellipse cx="1436.2" cy="204.4" rx="1.1" ry="1.8" fill="#d89694" opacity=".8"/>
<ellipse cx="1411.3" cy="209.8" rx="1.4" ry="1.1" fill="#e8bcb8" opacity=".8"/>
<ellipse cx="1424.6" cy="204.8" rx="1.8" ry="1.3" fill="#e8bcb8" opacity=".8"/>
<ellipse cx="1440.3" cy="214.7" rx="1.3" ry="1.7" fill="#e0aaa8" opacity=".8"/>
<ellipse cx="1396.3" cy="219.8" rx="2.2" ry="2.0" fill="#9cb070" opacity=".8"/>
<ellipse cx="1435.3" cy="212.3" rx="1.2" ry="1.9" fill="#d89694" opacity=".8"/>
<ellipse cx="1421.9" cy="203.1" rx="1.0" ry="2.0" fill="#e8bcb8" opacity=".8"/>
<ellipse cx="1412.4" cy="212.3" rx="2.1" ry="1.6" fill="#d89694" opacity=".8"/>
<ellipse cx="1400.7" cy="220.9" rx="1.7" ry="1.5" fill="#c98686" opacity=".8"/>
<ellipse cx="1434.3" cy="224.6" rx="1.8" ry="1.3" fill="#d89694" opacity=".8"/>
<ellipse cx="1387.4" cy="225.3" rx="1.6" ry="1.3" fill="#e8bcb8" opacity=".8"/>
</g>
</g></g>
<rect x="1276.3" y="258.7" width="40.7" height="13.3" fill="#f1f1f1" />
<rect x="1277.8" y="261.3" width="3" height="2" fill="#e9a060" opacity=".8"/>
<g filter="url(#b0)">
<rect x="1276.3" y="258.7" width="40.7" height="13.3" fill="none"/>
<path d="M1282.0 261.0 H1311.0" stroke="#333" stroke-width="1.29" stroke-dasharray="2.3 1.8 5.7 1.4 6.6 1.3 6.9 1.1 4.7 1.3" opacity="0.64" fill="none"/>
<path d="M1286.0 268.4 H1289.0" stroke="#555" stroke-width="1.10" stroke-dasharray="5.8 1.5" opacity="0.56" fill="none"/>
</g>
<rect x="1320.3" y="260.7" width="52.0" height="18.6" fill="#f2f2f2" />
<rect x="1333.0" y="264.4" width="8.0" height="2.0" fill="#f7e0b0" />
<rect x="1331.0" y="270.2" width="25.0" height="3.2" fill="#f7dfa8" />
<g filter="url(#b0)">
<path d="M1326.0 264.0 H1351.0" stroke="#555" stroke-width="1.01" stroke-dasharray="4.0 1.2 4.6 1.2 2.4 1.4 6.8 1.5 2.4 1.0" opacity="0.48" fill="none"/>
<path d="M1324.0 267.2 H1366.0" stroke="#888" stroke-width="0.83" stroke-dasharray="2.4 1.1 2.1 1.8 5.1 1.2 2.6 1.7 2.7 1.2 5.9 1.8 6.2 1.7 2.6 1.7 5.0 1.7" opacity="0.32" fill="none"/>
<path d="M1325.0 271.6 H1366.0" stroke="#333" stroke-width="1.29" stroke-dasharray="5.6 1.4 2.3 1.2 6.6 1.1 6.1 1.2 3.7 1.5 2.4 1.5 4.0 1.8 2.6 1.0" opacity="0.64" fill="none"/>
<path d="M1329.0 274.8 H1352.0" stroke="#444" stroke-width="1.10" stroke-dasharray="6.9 1.2 4.8 1.2 4.9 1.4 3.7 1.7" opacity="0.56" fill="none"/>
</g>
<rect x="1278.0" y="283.7" width="78.0" height="57.3" fill="#fcfcfc" />
<g filter="url(#b0)" opacity=".75">
<path d="M1278.4 288.6 l4 -4" stroke="#444" stroke-width="1.4"/>
<path d="M1335.0 284.8 H1356.0" stroke="#333" stroke-width="1.38" stroke-dasharray="4.4 1.6 2 2.6 1.6 1.2 5 40" opacity="0.68" fill="none"/>
<circle cx="1301" cy="311" r="9" fill="#e3e3e3" opacity=".9"/><path d="M1301 311 l-9 -7 M1301 311 l7 -8 M1301 311 l10 5 M1301 311 l-6 9 M1301 311 l-11 3 M1301 311 l2 -12 M1301 311 l12 -3" stroke="#bbb" stroke-width="0.7"/>
<rect x="1295.0" y="315.1" width="1.6" height="1.1" fill="#555" opacity="0.68"/>
<rect x="1284.9" y="289.6" width="2.6" height="0.9" fill="#555" opacity="0.44"/>
<rect x="1339.7" y="311.6" width="2.6" height="1.0" fill="#555" opacity="0.68"/>
<rect x="1289.9" y="319.5" width="2.7" height="1.0" fill="#555" opacity="0.74"/>
<rect x="1320.6" y="292.1" width="2.5" height="1.1" fill="#555" opacity="0.48"/>
<rect x="1282.8" y="330.5" width="1.8" height="1.1" fill="#555" opacity="0.83"/>
<rect x="1323.1" y="333.2" width="1.7" height="1.2" fill="#555" opacity="0.57"/>
<rect x="1336.2" y="331.2" width="1.0" height="0.8" fill="#555" opacity="0.43"/>
<rect x="1338.0" y="309.9" width="2.2" height="0.9" fill="#555" opacity="0.60"/>
<rect x="1303.8" y="305.8" width="2.1" height="1.1" fill="#555" opacity="0.84"/>
<rect x="1321.2" y="333.6" width="2.7" height="1.3" fill="#555" opacity="0.70"/>
<rect x="1290.6" y="330.3" width="2.9" height="1.2" fill="#555" opacity="0.64"/>
<rect x="1323.1" y="299.1" width="2.6" height="1.0" fill="#555" opacity="0.47"/>
<rect x="1284.7" y="330.0" width="3.0" height="0.8" fill="#555" opacity="0.78"/>
<rect x="1305.2" y="296.2" width="1.4" height="1.2" fill="#555" opacity="0.82"/>
<rect x="1283.6" y="318.5" width="0.9" height="1.1" fill="#555" opacity="0.50"/>
<rect x="1333.0" y="336.1" width="1.9" height="1.3" fill="#555" opacity="0.49"/>
<rect x="1285.5" y="317.8" width="0.9" height="0.8" fill="#555" opacity="0.54"/>
<rect x="1317.0" y="296.5" width="0.9" height="1.2" fill="#555" opacity="0.49"/>
<rect x="1337.6" y="332.0" width="1.6" height="1.0" fill="#555" opacity="0.61"/>
<rect x="1319.0" y="317.6" width="2.0" height="1.1" fill="#555" opacity="0.86"/>
<rect x="1310.9" y="309.7" width="2.4" height="0.8" fill="#555" opacity="0.48"/>
<rect x="1338.7" y="314.0" width="2.0" height="0.7" fill="#555" opacity="0.55"/>
<rect x="1315.2" y="290.0" width="2.2" height="1.1" fill="#555" opacity="0.34"/>
<rect x="1318.0" y="311.4" width="2.3" height="0.9" fill="#555" opacity="0.72"/>
<rect x="1324.5" y="290.1" width="0.9" height="1.1" fill="#555" opacity="0.88"/>
<rect x="1295.8" y="310.9" width="2.1" height="0.9" fill="#555" opacity="0.52"/>
<rect x="1299.4" y="306.7" width="2.1" height="0.9" fill="#555" opacity="0.53"/>
<rect x="1326.6" y="290.3" width="2.1" height="1.1" fill="#555" opacity="0.49"/>
<rect x="1294.1" y="327.6" width="1.3" height="0.8" fill="#555" opacity="0.56"/>
<rect x="1322.2" y="293.9" width="1.5" height="0.9" fill="#555" opacity="0.80"/>
<rect x="1306.9" y="330.1" width="1.2" height="0.9" fill="#555" opacity="0.69"/>
<rect x="1333.2" y="310.7" width="1.3" height="0.8" fill="#555" opacity="0.62"/>
<rect x="1292.3" y="327.7" width="2.6" height="0.8" fill="#555" opacity="0.47"/>
<rect x="1328.6" y="319.8" width="2.6" height="0.9" fill="#555" opacity="0.38"/>
<rect x="1298.2" y="327.1" width="1.4" height="0.9" fill="#555" opacity="0.55"/>
<rect x="1305.8" y="308.7" width="2.8" height="0.8" fill="#555" opacity="0.30"/>
<rect x="1336.7" y="331.2" width="3.0" height="1.0" fill="#555" opacity="0.87"/>
<rect x="1335.7" y="299.7" width="2.4" height="1.2" fill="#555" opacity="0.70"/>
<rect x="1311.6" y="302.9" width="1.6" height="0.8" fill="#555" opacity="0.34"/>
<rect x="1315.7" y="302.8" width="2.6" height="0.7" fill="#555" opacity="0.84"/>
<rect x="1321.9" y="333.3" width="2.8" height="1.2" fill="#555" opacity="0.65"/>
<rect x="1281.8" y="324.8" width="1.2" height="0.9" fill="#555" opacity="0.70"/>
<rect x="1312.0" y="308.9" width="2.9" height="1.1" fill="#555" opacity="0.50"/>
<rect x="1295.9" y="330.4" width="1.8" height="1.2" fill="#555" opacity="0.51"/>
<rect x="1292.6" y="314.7" width="2.6" height="0.8" fill="#555" opacity="0.78"/>
<path d="M1326 292 q-2 12 8 20 q6 10 -4 22 q-6 6 -14 8" stroke="#ccc" stroke-width="0.8" fill="none"/>
<path d="M1343.6 299 v32 M1352 309 v24" stroke="#aaa" stroke-width="0.8" stroke-dasharray="1.6 1.2"/><path d="M1344 289.6 h7 M1345 293.4 h4 M1346 300 h9 M1343 307 h10" stroke="#777" stroke-width="0.8" opacity=".7"/>
<path d="M1296.0 337.2 H1320.0" stroke="#666" stroke-width="0.83" stroke-dasharray="5.1 1.0 5.0 1.4 5.7 1.6 3.0 1.5" opacity="0.48" fill="none"/>
</g>
<g clip-path="url(#cpcity)">
<rect x="1048.4" y="380.0" width="79.6" height="53.7" fill="url(#city)" />
<path d="M1049 392.2 H1128" stroke="#b5c4d8" stroke-width="0.9" opacity=".7"/>
<g filter="url(#b0)"><path d="M1128 397 L1110 403 Q1098 412 1090 422 L1085 433.7 H1128 Z" fill="#b2b2b2"/><path d="M1128 412 q-14 2 -22 12 l-4 9.7 h26 Z" fill="#a2a2a2"/>
<rect x="1079.3" y="414.4" width="1.9" height="4.0" fill="#c2bab2" opacity=".85"/>
<rect x="1061.7" y="424.2" width="2.3" height="3.8" fill="#c2bab2" opacity=".85"/>
<rect x="1055.3" y="404.1" width="2.1" height="4.1" fill="#cdcdcd" opacity=".85"/>
<rect x="1091.5" y="415.8" width="2.9" height="3.4" fill="#6e6e6e" opacity=".85"/>
<rect x="1090.2" y="398.3" width="2.7" height="1.6" fill="#868686" opacity=".85"/>
<rect x="1051.4" y="427.2" width="2.6" height="2.4" fill="#868686" opacity=".85"/>
<rect x="1088.6" y="399.8" width="2.3" height="2.9" fill="#b8b0a8" opacity=".85"/>
<rect x="1093.4" y="410.3" width="1.8" height="3.1" fill="#d8d8d8" opacity=".85"/>
<rect x="1111.4" y="395.3" width="1.6" height="2.1" fill="#d8d8d8" opacity=".85"/>
<rect x="1068.4" y="394.8" width="1.8" height="3.9" fill="#cdcdcd" opacity=".85"/>
<rect x="1074.9" y="430.3" width="1.4" height="4.2" fill="#868686" opacity=".85"/>
<rect x="1052.5" y="407.0" width="1.8" height="3.1" fill="#6e6e6e" opacity=".85"/>
<rect x="1062.3" y="419.0" width="1.2" height="2.4" fill="#9a928c" opacity=".85"/>
<rect x="1056.9" y="401.9" width="1.0" height="2.8" fill="#cdcdcd" opacity=".85"/>
<rect x="1081.6" y="419.3" width="1.9" height="2.0" fill="#b8b0a8" opacity=".85"/>
<rect x="1098.0" y="397.2" width="1.2" height="2.7" fill="#6e6e6e" opacity=".85"/>
<rect x="1063.3" y="402.8" width="3.0" height="1.5" fill="#d8d8d8" opacity=".85"/>
<rect x="1061.5" y="431.8" width="1.1" height="1.8" fill="#cdcdcd" opacity=".85"/>
<rect x="1078.6" y="392.4" width="2.7" height="2.6" fill="#9a928c" opacity=".85"/>
<rect x="1054.0" y="400.3" width="1.0" height="2.5" fill="#b8b0a8" opacity=".85"/>
<rect x="1090.7" y="397.1" width="2.7" height="1.8" fill="#c2bab2" opacity=".85"/>
<rect x="1074.9" y="417.1" width="2.8" height="3.9" fill="#d8d8d8" opacity=".85"/>
<rect x="1065.7" y="399.6" width="1.4" height="4.3" fill="#e0e0e0" opacity=".85"/>
<rect x="1077.2" y="396.2" width="2.0" height="2.2" fill="#868686" opacity=".85"/>
<rect x="1098.6" y="407.7" width="2.6" height="3.2" fill="#6e6e6e" opacity=".85"/>
<rect x="1068.7" y="399.0" width="1.3" height="2.8" fill="#cdcdcd" opacity=".85"/>
<rect x="1092.8" y="416.6" width="1.6" height="4.2" fill="#cdcdcd" opacity=".85"/>
<rect x="1062.7" y="392.7" width="1.8" height="2.1" fill="#d8d8d8" opacity=".85"/>
<rect x="1052.1" y="403.3" width="2.1" height="1.8" fill="#e0e0e0" opacity=".85"/>
<rect x="1073.3" y="427.6" width="2.3" height="3.5" fill="#9a928c" opacity=".85"/>
<rect x="1088.2" y="397.6" width="2.8" height="2.8" fill="#868686" opacity=".85"/>
<rect x="1073.0" y="404.5" width="1.0" height="3.3" fill="#868686" opacity=".85"/>
<rect x="1081.3" y="421.2" width="1.3" height="1.6" fill="#9a928c" opacity=".85"/>
<rect x="1079.4" y="406.7" width="2.8" height="3.6" fill="#868686" opacity=".85"/>
<rect x="1087.4" y="417.0" width="1.8" height="1.4" fill="#6e6e6e" opacity=".85"/>
<rect x="1053.8" y="395.6" width="3.0" height="4.0" fill="#cdcdcd" opacity=".85"/>
<rect x="1097.8" y="407.5" width="1.9" height="3.9" fill="#c2bab2" opacity=".85"/>
<rect x="1054.6" y="422.0" width="1.6" height="1.7" fill="#868686" opacity=".85"/>
<rect x="1050.5" y="430.3" width="2.0" height="3.2" fill="#cdcdcd" opacity=".85"/>
<rect x="1049.8" y="404.0" width="2.0" height="3.7" fill="#b8b0a8" opacity=".85"/>
<rect x="1071.9" y="429.2" width="2.8" height="2.4" fill="#c2bab2" opacity=".85"/>
<rect x="1093.6" y="399.9" width="2.6" height="3.7" fill="#6e6e6e" opacity=".85"/>
<rect x="1062.4" y="400.6" width="2.2" height="2.3" fill="#b8b0a8" opacity=".85"/>
<rect x="1058.1" y="411.9" width="2.4" height="4.3" fill="#868686" opacity=".85"/>
<rect x="1067.5" y="398.8" width="1.9" height="4.2" fill="#c2bab2" opacity=".85"/>
<rect x="1083.8" y="418.9" width="1.6" height="3.9" fill="#c2bab2" opacity=".85"/>
<rect x="1067.6" y="416.3" width="2.1" height="2.3" fill="#d8d8d8" opacity=".85"/>
<rect x="1102.0" y="392.8" width="1.8" height="2.0" fill="#7a7a7a" opacity=".85"/>
<rect x="1100.5" y="402.7" width="2.6" height="4.4" fill="#7a7a7a" opacity=".85"/>
<rect x="1056.7" y="396.4" width="2.3" height="3.8" fill="#e0e0e0" opacity=".85"/>
<rect x="1062.4" y="411.0" width="2.4" height="3.7" fill="#7a7a7a" opacity=".85"/>
<rect x="1084.8" y="393.4" width="1.5" height="2.4" fill="#b8b0a8" opacity=".85"/>
<rect x="1095.7" y="412.8" width="1.8" height="3.8" fill="#7a7a7a" opacity=".85"/>
<rect x="1109.7" y="395.5" width="1.3" height="2.8" fill="#6e6e6e" opacity=".85"/>
<rect x="1074.2" y="414.8" width="2.6" height="4.2" fill="#e0e0e0" opacity=".85"/>
<rect x="1080.1" y="418.1" width="1.2" height="4.0" fill="#b8b0a8" opacity=".85"/>
<rect x="1057.3" y="401.7" width="3.0" height="4.3" fill="#6e6e6e" opacity=".85"/>
<rect x="1085.0" y="423.6" width="1.5" height="3.6" fill="#9a928c" opacity=".85"/>
<rect x="1050.0" y="412.2" width="1.9" height="3.1" fill="#868686" opacity=".85"/>
<rect x="1100.5" y="411.5" width="1.4" height="4.0" fill="#868686" opacity=".85"/>
<rect x="1077.7" y="393.4" width="1.7" height="3.8" fill="#e0e0e0" opacity=".85"/>
<rect x="1058.4" y="397.9" width="2.8" height="3.0" fill="#e0e0e0" opacity=".85"/>
<rect x="1094.4" y="409.6" width="2.2" height="3.5" fill="#c2bab2" opacity=".85"/>
<rect x="1099.8" y="409.6" width="1.6" height="3.6" fill="#e0e0e0" opacity=".85"/>
<rect x="1091.8" y="412.9" width="1.5" height="3.4" fill="#e0e0e0" opacity=".85"/>
<rect x="1089.8" y="404.2" width="2.9" height="3.0" fill="#7a7a7a" opacity=".85"/>
<rect x="1087.4" y="400.0" width="1.2" height="1.4" fill="#e0e0e0" opacity=".85"/>
<rect x="1074.3" y="413.5" width="2.0" height="2.6" fill="#868686" opacity=".85"/>
<rect x="1102.7" y="414.5" width="1.2" height="1.9" fill="#c2bab2" opacity=".85"/>
<rect x="1076.1" y="401.9" width="1.3" height="2.7" fill="#c2bab2" opacity=".85"/>
<rect x="1080.9" y="404.7" width="1.8" height="1.5" fill="#b8b0a8" opacity=".85"/>
<rect x="1066.4" y="420.1" width="1.1" height="1.9" fill="#868686" opacity=".85"/>
<rect x="1049.8" y="403.4" width="1.5" height="2.9" fill="#9a928c" opacity=".85"/>
<rect x="1082.5" y="415.3" width="2.2" height="3.6" fill="#e0e0e0" opacity=".85"/>
<rect x="1050.6" y="417.3" width="2.2" height="3.0" fill="#e0e0e0" opacity=".85"/>
<rect x="1063.6" y="400.6" width="2.2" height="4.0" fill="#e0e0e0" opacity=".85"/>
<rect x="1064.6" y="421.6" width="2.8" height="2.3" fill="#9a928c" opacity=".85"/>
<rect x="1070.1" y="428.9" width="2.6" height="2.0" fill="#b8b0a8" opacity=".85"/>
<rect x="1055.5" y="427.6" width="2.5" height="2.2" fill="#7a7a7a" opacity=".85"/>
<rect x="1055.5" y="425.3" width="2.1" height="3.5" fill="#6e6e6e" opacity=".85"/>
<rect x="1062.4" y="417.1" width="1.2" height="3.1" fill="#868686" opacity=".85"/>
<rect x="1073.0" y="424.8" width="1.2" height="2.9" fill="#9a928c" opacity=".85"/>
<rect x="1099.8" y="412.1" width="2.6" height="2.8" fill="#b8b0a8" opacity=".85"/>
<rect x="1050.6" y="422.5" width="2.8" height="2.8" fill="#e0e0e0" opacity=".85"/>
<rect x="1061.7" y="396.6" width="2.7" height="4.4" fill="#7a7a7a" opacity=".85"/>
<rect x="1111.1" y="395.8" width="1.3" height="3.4" fill="#868686" opacity=".85"/>
<rect x="1054.2" y="395.9" width="1.9" height="2.9" fill="#6e6e6e" opacity=".85"/>
<rect x="1077.8" y="416.0" width="2.3" height="1.5" fill="#868686" opacity=".85"/>
<rect x="1062.4" y="408.3" width="2.5" height="2.6" fill="#9a928c" opacity=".85"/>
<rect x="1062.1" y="398.6" width="2.6" height="2.4" fill="#e0e0e0" opacity=".85"/>
<rect x="1054.7" y="425.7" width="2.1" height="2.0" fill="#6e6e6e" opacity=".85"/>
<rect x="1088.2" y="405.6" width="1.6" height="1.7" fill="#d8d8d8" opacity=".85"/>
<rect x="1098.8" y="398.4" width="1.3" height="2.4" fill="#6e6e6e" opacity=".85"/>
<rect x="1085.1" y="406.8" width="2.5" height="2.6" fill="#6e6e6e" opacity=".85"/>
<rect x="1097.4" y="394.8" width="1.6" height="1.7" fill="#9a928c" opacity=".85"/>
<rect x="1109.5" y="394.0" width="2.9" height="3.4" fill="#d8d8d8" opacity=".85"/>
<rect x="1071.6" y="418.4" width="2.1" height="2.6" fill="#7a7a7a" opacity=".85"/>
<rect x="1114.7" y="392.9" width="2.5" height="2.2" fill="#cdcdcd" opacity=".85"/>
<rect x="1075.9" y="394.0" width="2.3" height="1.4" fill="#b8b0a8" opacity=".85"/>
<rect x="1066.3" y="403.0" width="2.1" height="2.9" fill="#9a928c" opacity=".85"/>
<rect x="1103.2" y="395.0" width="1.8" height="4.2" fill="#868686" opacity=".85"/>
<rect x="1074.9" y="430.8" width="2.1" height="3.2" fill="#c2bab2" opacity=".85"/>
<rect x="1077.8" y="411.8" width="2.1" height="3.2" fill="#d8d8d8" opacity=".85"/>
<rect x="1073.5" y="403.4" width="2.1" height="2.3" fill="#d8d8d8" opacity=".85"/>
<rect x="1097.0" y="403.8" width="2.5" height="3.2" fill="#868686" opacity=".85"/>
<rect x="1091.4" y="408.4" width="1.1" height="2.3" fill="#6e6e6e" opacity=".85"/>
<rect x="1075.7" y="415.3" width="1.1" height="4.1" fill="#9a928c" opacity=".85"/>
<rect x="1077.8" y="411.1" width="1.1" height="1.7" fill="#b8b0a8" opacity=".85"/>
<rect x="1058.7" y="430.4" width="2.2" height="1.7" fill="#b8b0a8" opacity=".85"/>
<rect x="1090.8" y="410.2" width="2.7" height="2.5" fill="#b8b0a8" opacity=".85"/>
<rect x="1059.4" y="406.5" width="2.3" height="2.8" fill="#7a7a7a" opacity=".85"/>
<rect x="1066.6" y="415.3" width="1.7" height="3.6" fill="#6e6e6e" opacity=".85"/>
<rect x="1103.6" y="397.5" width="2.5" height="2.1" fill="#d8d8d8" opacity=".85"/>
<rect x="1056.6" y="427.7" width="2.2" height="2.5" fill="#e0e0e0" opacity=".85"/>
<rect x="1067.2" y="419.4" width="2.3" height="3.7" fill="#b8b0a8" opacity=".85"/>
<rect x="1061.7" y="402.0" width="2.8" height="1.5" fill="#b8b0a8" opacity=".85"/>
<rect x="1053.1" y="402.8" width="1.1" height="1.5" fill="#6e6e6e" opacity=".85"/>
<rect x="1063.9" y="403.1" width="2.8" height="1.9" fill="#cdcdcd" opacity=".85"/>
<rect x="1064.7" y="431.3" width="2.0" height="2.0" fill="#c2bab2" opacity=".85"/>
<rect x="1072.0" y="421.8" width="2.6" height="2.7" fill="#cdcdcd" opacity=".85"/>
<rect x="1100.5" y="409.8" width="1.8" height="1.9" fill="#d8d8d8" opacity=".85"/>
<rect x="1059.3" y="425.5" width="1.6" height="3.7" fill="#9a928c" opacity=".85"/>
<rect x="1104.4" y="399.4" width="2.2" height="2.8" fill="#9a928c" opacity=".85"/>
<rect x="1070.7" y="413.7" width="2.1" height="2.9" fill="#6e6e6e" opacity=".85"/>
<rect x="1094.9" y="404.0" width="1.2" height="2.0" fill="#868686" opacity=".85"/>
<rect x="1093.4" y="395.3" width="2.0" height="3.7" fill="#d8d8d8" opacity=".85"/>
<rect x="1071.0" y="427.3" width="1.7" height="3.6" fill="#b8b0a8" opacity=".85"/>
<rect x="1073.5" y="396.7" width="2.1" height="4.2" fill="#c2bab2" opacity=".85"/>
<rect x="1078.3" y="424.1" width="1.9" height="2.1" fill="#d8d8d8" opacity=".85"/>
<rect x="1083.6" y="395.4" width="1.0" height="3.4" fill="#9a928c" opacity=".85"/>
<rect x="1098.5" y="406.7" width="2.1" height="3.9" fill="#6e6e6e" opacity=".85"/>
<rect x="1086.7" y="399.1" width="2.8" height="2.2" fill="#c2bab2" opacity=".85"/>
<rect x="1050.5" y="412.6" width="1.3" height="2.3" fill="#e0e0e0" opacity=".85"/>
<rect x="1050.5" y="425.7" width="1.1" height="3.0" fill="#6e6e6e" opacity=".85"/>
<rect x="1101.8" y="395.4" width="1.5" height="1.7" fill="#cdcdcd" opacity=".85"/>
<rect x="1070.0" y="393.0" width="1.2" height="3.8" fill="#7a7a7a" opacity=".85"/>
<rect x="1077.3" y="420.5" width="2.5" height="3.0" fill="#c2bab2" opacity=".85"/>
<rect x="1100.2" y="407.8" width="2.6" height="2.4" fill="#9a928c" opacity=".85"/>
<rect x="1058.2" y="411.5" width="2.4" height="4.1" fill="#cdcdcd" opacity=".85"/>
<rect x="1076.5" y="425.0" width="2.7" height="3.8" fill="#9a928c" opacity=".85"/>
<rect x="1094.4" y="386.6" width="1.6" height="8" fill="#707070"/><rect x="1065" y="388.6" width="1.2" height="6" fill="#808080"/><rect x="1088" y="389.2" width="1.8" height="5" fill="#808080"/><rect x="1076" y="390" width="1.4" height="4" fill="#8a8a8a"/>
</g>
<path d="M1058 430 Q1090 420 1124 396" stroke="#c09ae8" stroke-width="1.3" stroke-dasharray="2 3.4" fill="none" opacity=".8" filter="url(#b0)"/><path d="M1066 432 q12 -8 22 -14" stroke="#e09a86" stroke-width="1" fill="none" opacity=".6"/>
</g>
<rect x="1165.3" y="373.3" width="51.4" height="13.4" fill="#f1f1f1" />
<g filter="url(#b0)">
<rect x="1165.3" y="373.3" width="51.4" height="13.4" fill="none"/>
<path d="M1177.0 376.2 H1212.0" stroke="#333" stroke-width="1.20" stroke-dasharray="5.2 0.8 2.3 1.2 3.0 1.0 3.0 1.7 3.3 1.4 4.0 1.7 3.7 1.1 2.7 1.3" opacity="0.60" fill="none"/>
<path d="M1171.0 379.6 H1193.0" stroke="#444" stroke-width="1.10" stroke-dasharray="5.7 1.3 2.2 1.1 2.1 1.5 6.5 1.0 2.8 1.3" opacity="0.56" fill="none"/>
<path d="M1171.0 384.0 H1191.0" stroke="#555" stroke-width="1.01" stroke-dasharray="6.4 1.5 3.7 1.0 4.4 0.9 7.0 1.1" opacity="0.48" fill="none"/>
</g>
<g clip-path="url(#cptrain)">
<rect x="1165.3" y="389.0" width="66.3" height="33.3" fill="#b7cbe6" />
<g filter="url(#b0)"><path d="M1165.3 404 L1180 403 L1231.6 416 V422.3 H1165.3 Z" fill="#77776f"/><path d="M1165.3 404 v6 l60 12 h6.3 v-4 Z" fill="#8a8a84"/>
<path d="M1172 398 q0 -5 5 -5 l4 0.4 l38 13.6 q4 2 5 6 l-6 0.6 l-46 -9 Z" fill="#f3f4f6"/><path d="M1172.6 398.4 q0.4 -4 4 -4.4 l3 0.2 v9.4 l-7 -1.4 Z" fill="#6e6f72"/><path d="M1183 397 l34 12" stroke="#4c5058" stroke-width="2.2" stroke-dasharray="4 2.2"/><path d="M1180 404.6 l38 8.4" stroke="#7fb8d8" stroke-width="1.1"/>
<path d="M1194.6 389 v9 M1166 400 v6 M1212 401 v6 M1217 400 v7 M1228 404 v10" stroke="#8a8c90" stroke-width="0.9"/></g>
</g>
<rect x="1164.0" y="424.0" width="58.0" height="34.7" fill="#f1f1f1" />
<rect x="1176.0" y="438.4" width="42.0" height="1.2" fill="#f5d9a0" />
<g filter="url(#b0)">
<path d="M1165.6 426.6 H1216.0" stroke="#222" stroke-width="1.47" stroke-dasharray="6.7 1.4 6.9 1.4 2.3 1.8 2.1 1.8 2.4 0.9 6.9 1.6 5.6 1.2 6.4 1.3" opacity="0.64" fill="none"/>
<path d="M1165.6 430.0 H1208.0" stroke="#444" stroke-width="1.10" stroke-dasharray="4.6 0.9 6.8 0.8 6.4 1.1 5.7 1.4 6.2 0.9 5.2 1.3 6.9 1.2" opacity="0.52" fill="none"/>
<path d="M1165.6 433.4 H1216.0" stroke="#333" stroke-width="1.29" stroke-dasharray="4.1 0.9 6.3 1.8 5.0 1.6 5.3 1.3 2.6 1.3 3.5 0.8 5.0 1.5 6.0 0.8 5.8 1.5" opacity="0.60" fill="none"/>
<path d="M1165.6 437.0 H1218.0" stroke="#555" stroke-width="1.10" stroke-dasharray="4.2 1.1 2.2 1.8 2.1 1.2 5.9 1.1 6.3 1.7 6.9 1.0 3.3 1.4 4.8 1.7 2.5 1.6 2.9 1.5" opacity="0.48" fill="none"/>
<path d="M1165.6 440.6 H1212.0" stroke="#333" stroke-width="1.29" stroke-dasharray="5.4 1.0 3.8 1.2 4.8 1.6 3.5 1.0 4.2 1.5 5.3 1.6 4.1 1.0 5.4 1.2" opacity="0.60" fill="none"/>
<path d="M1165.6 444.0 H1202.0" stroke="#444" stroke-width="1.20" stroke-dasharray="7.0 1.6 4.6 1.2 4.0 1.1 4.1 1.2 2.2 1.5 2.3 1.3 3.3 1.0 2.2 1.8" opacity="0.56" fill="none"/>
<path d="M1165.6 448.0 H1220.0" stroke="#222" stroke-width="1.47" stroke-dasharray="5.5 1.3 5.0 1.8 6.0 1.5 3.8 1.1 2.7 1.0 4.0 0.8 6.3 1.1 5.9 1.4 5.3 1.7" opacity="0.64" fill="none"/>
<path d="M1165.6 451.4 H1218.0" stroke="#444" stroke-width="1.10" stroke-dasharray="6.0 1.3 4.0 1.5 6.9 1.0 5.7 0.8 4.9 1.7 5.2 1.6 2.4 1.4 3.8 1.0 4.3 0.9" opacity="0.52" fill="none"/>
<path d="M1165.6 454.8 H1190.0" stroke="#444" stroke-width="1.10" stroke-dasharray="2.3 1.7 4.9 1.6 2.9 1.1 6.8 1.2 4.9 1.0" opacity="0.52" fill="none"/>
</g>
<g clip-path="url(#cptm)">
<rect x="1048.0" y="461.0" width="98.0" height="67.7" fill="#fdfdfd" />
<path d="M1048 461 h15 q-1 12 -1 22 q5 12 3 22 q8 10 18 16 l-4 7.7 H1048 Z" fill="#dfe9f6"/><path d="M1106 461 h14 l0 12 q3 10 4 18 l-2 18 l2 10 l-3 9.7 h-13 l1 -30 q-5 -12 -4 -22 Z" fill="#e4ecf8"/><path d="M1134 498 q8 2 8 12 v12 h-9 Z" fill="#e2ebf7"/><path d="M1080 478 q8 -3 14 2 l-2 12 q-8 3 -12 -2 Z" fill="#e6eef8"/>
<g fill="none" stroke-linecap="round" stroke-linejoin="round" filter="url(#b0)" opacity=".9">
<path d="M1102 462.4 q-10 2 -23 0.4 q-7 3 -8 8 v16 q1 4 5.6 5.4 h11 v4.6 l11 14" stroke="#8cc890" stroke-width="1.3"/>
<path d="M1096.7 461 V499" stroke="#ee8c7c" stroke-width="1.8"/>
<path d="M1072 475 v12 M1078 473.6 q6 0 9 3 h18" stroke="#e09ab8" stroke-width="1.6"/>
<path d="M1090 492 h14.7 v36.7" stroke="#f2c08c" stroke-width="1.6"/>
<path d="M1134.7 461 l0.6 8 l5.4 7 v7 l-2.6 3 l-13.4 12.6 l-0.7 10 l-0.7 6 H1095.4" stroke="#8cbcec" stroke-width="1.8"/>
<path d="M1095 515 l-1 7 l-7 1.4 l-6 5.3" stroke="#f08876" stroke-width="1.6"/><path d="M1126 512 l13 12" stroke="#d07a98" stroke-width="1.2"/>
</g>
<g filter="url(#b0)" opacity=".8"><path d="M1100 470 h4 M1116 487.4 h5 M1127 486 h8 M1128 496.6 h6 M1130 502.6 h4 M1126 507 h3 M1117 511.6 h7 M1077 512.6 h6 M1073 516.4 h9 M1084 500.6 h5 M1099 521.6 h4" stroke="#333" stroke-width="1.1"/><path d="M1075 498 l10 8 M1080 504 l8 -2" stroke="#aaa" stroke-width="0.7"/></g>
</g>
<path d="M1162.6 439.2 Q1130 440 1110 462 Q1100 474 1090 477 M1085 453.6 Q1060 474 1063 492 Q1066 504 1076 508" stroke="#bd96ea" stroke-width="1.5" stroke-dasharray="2.2 3.6" fill="none" opacity=".85" filter="url(#b0)"/>
<path d="M1101 478 q4 8 -2 12 M1104 486 h3" stroke="#bd96ea" stroke-width="1.4" stroke-dasharray="2 2.4" fill="none" opacity=".8"/>
</svg>

</div>
<style>.card{background:#ebecec;border-radius:9px;box-shadow:0 1.5px 15px 2.5px rgba(0,0,0,.07),0 0.5px 3px rgba(0,0,0,.035);}</style>
<!-- patch editor -->
<svg style="left:0;top:0" width="1650" height="1350" viewBox="0 0 1650 1350">
<defs><filter id="psh" x="-10%" y="-20%" width="120%" height="150%"><feGaussianBlur stdDeviation="2"/></filter></defs>
<rect x="376" y="737.6" width="1274" height="612.4" fill="#353535"/>
<rect x="376" y="737.6" width="1274" height="45.1" fill="#2b2b2b"/>
<path d="M556.80 812.50 H1012.20 A7 7 0 0 1 1019.20 819.50 V949.10 A7 7 0 0 1 1012.20 956.10 H556.80 A7 7 0 0 1 549.80 949.10 V819.50 A7 7 0 0 1 556.80 812.50 Z" fill="#000" opacity=".38" filter="url(#psh)"/>
<clipPath id="cg"><path d="M556.80 811.50 H1012.20 A7 7 0 0 1 1019.20 818.50 V948.10 A7 7 0 0 1 1012.20 955.10 H556.80 A7 7 0 0 1 549.80 948.10 V818.50 A7 7 0 0 1 556.80 811.50 Z"/></clipPath>
<g clip-path="url(#cg)"><rect x="549.8" y="811.5" width="469.4" height="143.6" fill="#4a4a4a"/><rect x="549.8" y="811.5" width="469.4" height="29.5" fill="#595959"/></g>
<path d="M1270.80 812.50 H1443.00 A7 7 0 0 1 1450.00 819.50 V865.70 A7 7 0 0 1 1443.00 872.70 H1270.80 A7 7 0 0 1 1263.80 865.70 V819.50 A7 7 0 0 1 1270.80 812.50 Z" fill="#000" opacity=".42" filter="url(#psh)"/>
<clipPath id="cb0"><path d="M1270.80 811.50 H1443.00 A7 7 0 0 1 1450.00 818.50 V864.70 A7 7 0 0 1 1443.00 871.70 H1270.80 A7 7 0 0 1 1263.80 864.70 V818.50 A7 7 0 0 1 1270.80 811.50 Z"/></clipPath>
<g clip-path="url(#cb0)"><rect x="1263.8" y="811.50" width="186.2" height="60.2" fill="#067edc"/><rect x="1263.8" y="811.50" width="138.4" height="30.4" fill="#0790f4"/><rect x="1401.2" y="811.50" width="1.2" height="60.2" fill="#0668b8"/><rect x="1402.2" y="811.50" width="47.8" height="60.2" fill="#0371c9"/></g>
<path d="M1270.80 896.53 H1484.70 A7 7 0 0 1 1491.70 903.53 V949.73 A7 7 0 0 1 1484.70 956.73 H1270.80 A7 7 0 0 1 1263.80 949.73 V903.53 A7 7 0 0 1 1270.80 896.53 Z" fill="#000" opacity=".42" filter="url(#psh)"/>
<clipPath id="cb1"><path d="M1270.80 895.53 H1484.70 A7 7 0 0 1 1491.70 902.53 V948.73 A7 7 0 0 1 1484.70 955.73 H1270.80 A7 7 0 0 1 1263.80 948.73 V902.53 A7 7 0 0 1 1270.80 895.53 Z"/></clipPath>
<g clip-path="url(#cb1)"><rect x="1263.8" y="895.53" width="227.9" height="60.2" fill="#067edc"/><rect x="1263.8" y="895.53" width="180.2" height="30.4" fill="#0790f4"/><rect x="1443.0" y="895.53" width="1.2" height="60.2" fill="#0668b8"/><rect x="1444.0" y="895.53" width="47.7" height="60.2" fill="#0371c9"/></g>
<path d="M1270.80 980.56 H1558.20 A7 7 0 0 1 1565.20 987.56 V1033.76 A7 7 0 0 1 1558.20 1040.76 H1270.80 A7 7 0 0 1 1263.80 1033.76 V987.56 A7 7 0 0 1 1270.80 980.56 Z" fill="#000" opacity=".42" filter="url(#psh)"/>
<clipPath id="cb2"><path d="M1270.80 979.56 H1558.20 A7 7 0 0 1 1565.20 986.56 V1032.76 A7 7 0 0 1 1558.20 1039.76 H1270.80 A7 7 0 0 1 1263.80 1032.76 V986.56 A7 7 0 0 1 1270.80 979.56 Z"/></clipPath>
<g clip-path="url(#cb2)"><rect x="1263.8" y="979.56" width="301.4" height="60.2" fill="#067edc"/><rect x="1263.8" y="979.56" width="253.6" height="30.4" fill="#0790f4"/><rect x="1516.4" y="979.56" width="1.2" height="60.2" fill="#0668b8"/><rect x="1517.4" y="979.56" width="47.8" height="60.2" fill="#0371c9"/></g>
<path d="M1270.80 1064.59 H1495.10 A7 7 0 0 1 1502.10 1071.59 V1117.79 A7 7 0 0 1 1495.10 1124.79 H1270.80 A7 7 0 0 1 1263.80 1117.79 V1071.59 A7 7 0 0 1 1270.80 1064.59 Z" fill="#000" opacity=".42" filter="url(#psh)"/>
<clipPath id="cb3"><path d="M1270.80 1063.59 H1495.10 A7 7 0 0 1 1502.10 1070.59 V1116.79 A7 7 0 0 1 1495.10 1123.79 H1270.80 A7 7 0 0 1 1263.80 1116.79 V1070.59 A7 7 0 0 1 1270.80 1063.59 Z"/></clipPath>
<g clip-path="url(#cb3)"><rect x="1263.8" y="1063.59" width="238.3" height="60.2" fill="#067edc"/><rect x="1263.8" y="1063.59" width="190.6" height="30.4" fill="#0790f4"/><rect x="1453.4" y="1063.59" width="1.2" height="60.2" fill="#0668b8"/><rect x="1454.4" y="1063.59" width="47.7" height="60.2" fill="#0371c9"/></g>
<path d="M1270.80 1148.62 H1484.70 A7 7 0 0 1 1491.70 1155.62 V1201.82 A7 7 0 0 1 1484.70 1208.82 H1270.80 A7 7 0 0 1 1263.80 1201.82 V1155.62 A7 7 0 0 1 1270.80 1148.62 Z" fill="#000" opacity=".42" filter="url(#psh)"/>
<clipPath id="cb4"><path d="M1270.80 1147.62 H1484.70 A7 7 0 0 1 1491.70 1154.62 V1200.82 A7 7 0 0 1 1484.70 1207.82 H1270.80 A7 7 0 0 1 1263.80 1200.82 V1154.62 A7 7 0 0 1 1270.80 1147.62 Z"/></clipPath>
<g clip-path="url(#cb4)"><rect x="1263.8" y="1147.62" width="227.9" height="60.2" fill="#067edc"/><rect x="1263.8" y="1147.62" width="180.2" height="30.4" fill="#0790f4"/><rect x="1443.0" y="1147.62" width="1.2" height="60.2" fill="#0668b8"/><rect x="1444.0" y="1147.62" width="47.7" height="60.2" fill="#0371c9"/></g>
<path d="M1270.80 1232.65 H1484.70 A7 7 0 0 1 1491.70 1239.65 V1285.85 A7 7 0 0 1 1484.70 1292.85 H1270.80 A7 7 0 0 1 1263.80 1285.85 V1239.65 A7 7 0 0 1 1270.80 1232.65 Z" fill="#000" opacity=".42" filter="url(#psh)"/>
<clipPath id="cb5"><path d="M1270.80 1231.65 H1484.70 A7 7 0 0 1 1491.70 1238.65 V1284.85 A7 7 0 0 1 1484.70 1291.85 H1270.80 A7 7 0 0 1 1263.80 1284.85 V1238.65 A7 7 0 0 1 1270.80 1231.65 Z"/></clipPath>
<g clip-path="url(#cb5)"><rect x="1263.8" y="1231.65" width="227.9" height="60.2" fill="#067edc"/><rect x="1263.8" y="1231.65" width="180.2" height="30.4" fill="#0790f4"/><rect x="1443.0" y="1231.65" width="1.2" height="60.2" fill="#0668b8"/><rect x="1444.0" y="1231.65" width="47.7" height="60.2" fill="#0371c9"/></g>
<path d="M1270.80 1316.68 H1484.70 A7 7 0 0 1 1491.70 1323.68 V1369.88 A7 7 0 0 1 1484.70 1376.88 H1270.80 A7 7 0 0 1 1263.80 1369.88 V1323.68 A7 7 0 0 1 1270.80 1316.68 Z" fill="#000" opacity=".42" filter="url(#psh)"/>
<clipPath id="cb6"><path d="M1270.80 1315.68 H1484.70 A7 7 0 0 1 1491.70 1322.68 V1368.88 A7 7 0 0 1 1484.70 1375.88 H1270.80 A7 7 0 0 1 1263.80 1368.88 V1322.68 A7 7 0 0 1 1270.80 1315.68 Z"/></clipPath>
<g clip-path="url(#cb6)"><rect x="1263.8" y="1315.68" width="227.9" height="60.2" fill="#067edc"/><rect x="1263.8" y="1315.68" width="180.2" height="30.4" fill="#0790f4"/><rect x="1443.0" y="1315.68" width="1.2" height="60.2" fill="#0668b8"/><rect x="1444.0" y="1315.68" width="47.7" height="60.2" fill="#0371c9"/></g>
<g fill="none" stroke="rgba(255,255,255,0.40)" stroke-width="2.5">
<path d="M1010.3 855.0 C1141.5 855.0 1141.5 855.0 1272.8 855.0"/>
<path d="M1010.3 876.0 C1141.5 876.0 1141.5 939.0 1272.8 939.0"/>
<path d="M1010.3 897.0 C1141.5 897.0 1141.5 1023.1 1272.8 1023.1"/>
<path d="M1010.3 917.9 C1141.5 917.9 1141.5 1107.1 1272.8 1107.1"/>
<path d="M1010.3 938.8 C1141.5 938.8 1141.5 1191.1 1272.8 1191.1"/>
<path d="M1010.3 938.8 C1141.5 938.8 1141.5 1275.2 1272.8 1275.2"/>
<path d="M1010.3 938.8 C1141.5 938.8 1141.5 1359.2 1272.8 1359.2"/>
</g>
<circle cx="558.9" cy="855.0" r="3.05" fill="#a2a2a2"/><circle cx="1010.3" cy="855.0" r="3.1" fill="#fff"/>
<circle cx="558.9" cy="876.0" r="3.05" fill="#a2a2a2"/><circle cx="1010.3" cy="876.0" r="3.1" fill="#fff"/>
<circle cx="558.9" cy="897.0" r="3.05" fill="#a2a2a2"/><circle cx="1010.3" cy="897.0" r="3.1" fill="#fff"/>
<circle cx="558.9" cy="917.9" r="3.05" fill="#a2a2a2"/><circle cx="1010.3" cy="917.9" r="3.1" fill="#fff"/>
<circle cx="558.9" cy="938.8" r="3.05" fill="#a2a2a2"/><circle cx="1010.3" cy="938.8" r="3.1" fill="#fff"/>
<circle cx="1272.8" cy="855.00" r="3.1" fill="#fff"/>
<circle cx="1272.8" cy="939.03" r="3.1" fill="#fff"/>
<circle cx="1272.8" cy="1023.06" r="3.1" fill="#fff"/>
<circle cx="1272.8" cy="1107.09" r="3.1" fill="#fff"/>
<circle cx="1272.8" cy="1191.12" r="3.1" fill="#fff"/>
<circle cx="1272.8" cy="1275.15" r="3.1" fill="#fff"/>
<circle cx="1272.8" cy="1359.18" r="3.1" fill="#fff"/>
<g transform="translate(1414.10 828.00)"><rect x="0.5" y="0.5" width="23" height="23" rx="2.4" fill="#0b75cb" stroke="#4f9be0" stroke-width="0.9" stroke-dasharray="1.2 0.5"/><rect x="5.1" y="5.4" width="13.8" height="13.2" rx="0.6" fill="#4a90d9" stroke="#fff" stroke-width="1.6"/></g>
<g transform="translate(1455.85 912.03)"><rect x="0.5" y="0.5" width="23" height="23" rx="2.4" fill="#0b75cb" stroke="#4a97de" stroke-width="0.8" stroke-dasharray="1.2 0.5"/><path d="M0.9 21 L8 13.6 L11.6 16.6 L18 9.8 L23.1 16.4 V21.6 Q23.1 23.1 21.6 23.1 H2.4 Q0.9 23.1 0.9 21.6 Z" fill="#4a90d9" stroke="#fff" stroke-width="1.5" stroke-linejoin="round"/><circle cx="6.1" cy="6.2" r="2.3" fill="#0b75cb" stroke="#fff" stroke-width="1.4"/></g>
<g transform="translate(1529.30 995.66)"><path d="M0.6 6 V2.6 Q0.6 0.9 2.3 0.9 H8.4 Q9.6 0.9 10.2 2 L11.2 3.8 H21.6 Q23.3 3.8 23.3 5.5 V6 Z" fill="#0b75cb" stroke="#4a97de" stroke-width="0.8" stroke-dasharray="1.2 0.5"/><path d="M0.8 6.2 H23.2 V21.6 Q23.2 23.6 21.2 23.6 H2.8 Q0.8 23.6 0.8 21.6 Z" fill="#4a90d9" stroke="#fff" stroke-width="1.6" stroke-linejoin="round"/></g>
<g transform="translate(1466.25 1080.09)"><rect x="0.5" y="0.5" width="23" height="23" rx="2.4" fill="#0b75cb" stroke="#4f9be0" stroke-width="0.9" stroke-dasharray="1.2 0.5"/><rect x="5.1" y="5.4" width="13.8" height="13.2" rx="0.6" fill="#4a90d9" stroke="#fff" stroke-width="1.6"/></g>
<g transform="translate(1455.85 1164.12)"><rect x="0.5" y="0.5" width="23" height="23" rx="2.4" fill="#0b75cb" stroke="#4f9be0" stroke-width="0.9" stroke-dasharray="1.2 0.5"/><rect x="5.1" y="5.4" width="13.8" height="13.2" rx="0.6" fill="#4a90d9" stroke="#fff" stroke-width="1.6"/></g>
<g transform="translate(1455.85 1248.15)"><rect x="0.5" y="0.5" width="23" height="23" rx="2.4" fill="#0b75cb" stroke="#4f9be0" stroke-width="0.9" stroke-dasharray="1.2 0.5"/><rect x="5.1" y="5.4" width="13.8" height="13.2" rx="0.6" fill="#4a90d9" stroke="#fff" stroke-width="1.6"/></g>
<g transform="translate(1455.85 1332.18)"><rect x="0.5" y="0.5" width="23" height="23" rx="2.4" fill="#0b75cb" stroke="#4f9be0" stroke-width="0.9" stroke-dasharray="1.2 0.5"/><rect x="5.1" y="5.4" width="13.8" height="13.2" rx="0.6" fill="#4a90d9" stroke="#fff" stroke-width="1.6"/></g>
</svg>
<!-- sidebar -->
<svg style="left:0;top:0" width="380" height="1350" viewBox="0 0 380 1350">
<defs>
<symbol id="fold" viewBox="0 0 26 25" overflow="visible"><path d="M1.6 8 V3.2 Q1.6 1.2 3.6 1.2 H9.6 Q11 1.2 11.6 2.6 L12.6 4.6 H22.4 Q24.4 4.6 24.4 6.6 V8 Z" fill="#ededed" stroke="#c2c2c2" stroke-width="0.9"/><path d="M1.5 7.6 H24.6 V21.2 Q24.6 23.8 22 23.8 H4.1 Q1.5 23.8 1.5 21.2 Z" fill="#c9c9c9" stroke="#141414" stroke-width="1.6" stroke-linejoin="round"/></symbol>
<symbol id="rect" viewBox="0 0 24 24" overflow="visible"><rect x="0.5" y="0.5" width="22.6" height="22.6" rx="3" fill="#fafafa" stroke="#cdcdcd" stroke-width="1"/><rect x="4.6" y="4.9" width="14.4" height="13.6" rx="0.8" fill="#c9c9c9" stroke="#141414" stroke-width="1.7"/></symbol>
<symbol id="td" viewBox="0 0 14 12" overflow="visible"><path d="M0 0 H13.3 L6.65 10.9 Z" fill="#7c7c7c"/></symbol>
<symbol id="tr" viewBox="0 0 12 14" overflow="visible"><path d="M0 0 V12.6 L10.8 6.3 Z" fill="#7c7c7c"/></symbol>
</defs>
<rect x="0" y="70.6" width="374.2" height="1280" fill="#f6f6f6"/>
<rect x="0" y="70.6" width="374.2" height="83.6" fill="#fff"/>
<rect x="0" y="111.8" width="374.2" height="1.1" fill="#e1e1e1"/>
<rect x="0" y="153.8" width="374.2" height="1.1" fill="#e4e4e4"/>
<rect x="374.2" y="70.6" width="1.2" height="667" fill="#e7e7e6"/>
<rect x="374.2" y="737.6" width="1.8" height="613" fill="#cdcdcd"/>
<path transform="translate(16.5 86.1)" d="M0 0 H13.5 L6.75 10.2 Z" fill="#111"/>
<path transform="translate(16.5 128.1)" d="M0 0 H13.5 L6.75 10.2 Z" fill="#111"/>
<rect x="5.5" y="161" width="362.5" height="44" rx="7" fill="#e3e3e3"/>
<use href="#td" x="16.5" y="177.2" width="14" height="12"/>
<g transform="translate(37 171)"><rect x="0.5" y="0.5" width="22.4" height="22.8" rx="3.2" fill="#ebebeb" stroke="#b5b5b5" stroke-width="1"/><path d="M11.7 7.9 C12.4 7.9 13.3 7.1 14.6 7.2 C15.7 7.3 16.7 7.8 17.3 8.8 C15.6 9.9 15.8 12.4 17.7 13.2 C17.3 14.5 16.6 15.8 15.7 16.8 C14.9 17.6 14.1 17.6 13.3 17.2 C12.4 16.8 11.5 16.8 10.6 17.2 C9.7 17.6 9 17.6 8.2 16.8 C5.5 14 5.5 8.7 8.8 7.5 C10 7.1 11 7.9 11.7 7.9 Z" fill="#b7b7b7" stroke="#161616" stroke-width="1.4" stroke-linejoin="round"/><path d="M11.8 6.9 C11.7 5.3 12.8 4 14.4 3.8 C14.5 5.4 13.3 6.8 11.8 6.9 Z" fill="#161616"/></g>
<use href="#td" x="37.5" y="221.9" width="14" height="12"/>
<use href="#fold" x="56.9" y="215.4" width="26" height="25"/>
<use href="#rect" x="79.3" y="261.3" width="24" height="24"/>
<use href="#tr" x="60.2" y="311.5" width="12" height="14"/>
<use href="#fold" x="78.3" y="305.4" width="26" height="25"/>
<use href="#rect" x="79.3" y="351.3" width="24" height="24"/>
<use href="#tr" x="38.8" y="401.5" width="12" height="14"/>
<use href="#fold" x="56.9" y="395.4" width="26" height="25"/>
<use href="#tr" x="38.8" y="446.5" width="12" height="14"/>
<use href="#fold" x="56.9" y="440.4" width="26" height="25"/>
<use href="#tr" x="38.8" y="491.5" width="12" height="14"/>
<use href="#fold" x="56.9" y="485.4" width="26" height="25"/>
</svg>
<!-- toolbar -->
<svg style="left:0;top:0" width="1650" height="80" viewBox="0 0 1650 80">
<defs>
<linearGradient id="tbg" x1="0" y1="0" x2="0" y2="1"><stop offset="0" stop-color="#dfdfdf"/><stop offset="0.45" stop-color="#d6d6d6"/><stop offset="1" stop-color="#cccccc"/></linearGradient>
<linearGradient id="btg" x1="0" y1="0" x2="0" y2="1"><stop offset="0" stop-color="#fdfdfd"/><stop offset="1" stop-color="#f3f3f3"/></linearGradient>
<filter id="bsh" x="-5%" y="-20%" width="110%" height="150%"><feGaussianBlur stdDeviation="0.7"/></filter>
</defs>
<rect x="0" y="0" width="1650" height="69.3" fill="url(#tbg)"/>
<rect x="0" y="69.05" width="1650" height="1.6" fill="#a7a7a7"/>
<rect x="0" y="70.65" width="1650" height="0.6" fill="#d9d9d9" opacity=".7"/>
<rect x="11" y="6.4" width="231.4" height="33.7" rx="6" fill="#000" opacity=".26" filter="url(#bsh)"/>
<rect x="11" y="5.5" width="231.4" height="33.7" rx="6" fill="url(#btg)" stroke="rgba(0,0,0,.09)" stroke-width="0.5"/>
<g transform="translate(222 12)"><path d="M2 8.3 L7.3 3 L12.6 8.3 M2 13.4 L7.3 18.7 L12.6 13.4" fill="none" stroke="#444" stroke-width="1.7" stroke-linecap="round" stroke-linejoin="round"/></g>
<rect x="275" y="6.4" width="62" height="33.7" rx="6" fill="#000" opacity=".26" filter="url(#bsh)"/>
<rect x="275" y="5.5" width="62" height="33.7" rx="6" fill="url(#btg)" stroke="rgba(0,0,0,.09)" stroke-width="0.5"/>
<g transform="translate(285 10)"><path d="M4.2 13.1 H22.4 M13.3 4.2 V22.2" fill="none" stroke="#5a5a5a" stroke-width="1.4"/><path d="M33.7 10.1 L38.8 15.2 L43.9 10.1" fill="none" stroke="#444" stroke-width="1.7" stroke-linecap="round" stroke-linejoin="round"/></g>
<rect x="348.5" y="6.4" width="66.5" height="33.7" rx="6" fill="#000" opacity=".26" filter="url(#bsh)"/>
<rect x="348.5" y="5.5" width="66.5" height="33.7" rx="6" fill="url(#btg)" stroke="rgba(0,0,0,.09)" stroke-width="0.5"/>
<g transform="translate(370 11)"><path d="M14.6 8.5 V3.6 H3.6 V19.8 H14.6 V14.6" fill="none" stroke="#bdbdbd" stroke-width="1.4" stroke-linejoin="round"/><circle cx="8.3" cy="11.5" r="2.3" fill="#c4c4c4"/><path d="M9 11.5 H20.5 M17.3 8 L21 11.5 L17.3 15" fill="none" stroke="#c4c4c4" stroke-width="1.3" stroke-linejoin="round"/></g>
<rect x="447.5" y="6.4" width="253" height="33.7" rx="6" fill="#000" opacity=".26" filter="url(#bsh)"/>
<rect x="447.5" y="5.5" width="253" height="33.7" rx="6" fill="url(#btg)" stroke="rgba(0,0,0,.09)" stroke-width="0.5"/>
<rect x="532" y="6" width="1" height="33" fill="#dedede"/>
<path d="M616 5.5 H694.5 A6 6 0 0 1 700.5 11.5 V33.2 A6 6 0 0 1 694.5 39.2 H616 Z" fill="#6c6c6c"/>
<g transform="translate(478 8.6)"><rect x="2" y="2.3" width="21.8" height="21.6" rx="1.6" fill="none" stroke="#4e4e4e" stroke-width="1.5"/><rect x="6.6" y="6.7" width="12.5" height="12.5" fill="#e2e2e2" stroke="#4e4e4e" stroke-width="1.6"/><circle cx="6.6" cy="6.7" r="1.9" fill="#4e4e4e"/><circle cx="19.1" cy="6.7" r="1.9" fill="#4e4e4e"/><circle cx="6.6" cy="19.2" r="1.9" fill="#4e4e4e"/><circle cx="19.1" cy="19.2" r="1.9" fill="#4e4e4e"/></g>
<g transform="translate(560 8.6)"><rect x="2.6" y="3.6" width="20.5" height="3.8" fill="#cfcfcf"/><rect x="2.6" y="2.3" width="20.6" height="21.6" rx="2.6" fill="none" stroke="#555" stroke-width="1.5"/><path d="M2.6 7.6 H23.2" stroke="#777" stroke-width="1"/><circle cx="6.9" cy="11.8" r="1.4" fill="#c8c8c8"/><circle cx="18.9" cy="11.8" r="1.4" fill="#c8c8c8"/><circle cx="6.9" cy="17.8" r="1.4" fill="#c8c8c8"/></g>
<g transform="translate(642 8.6)"><rect x="2.8" y="2.3" width="21.5" height="21.6" rx="1" fill="none" stroke="#fff" stroke-width="1.5"/><path d="M13.3 2.3 V23.9" stroke="#fff" stroke-width="1.5"/><path d="M3 5.8 H13.3" stroke="#fff" stroke-width="1.1"/><rect x="6.9" y="10.7" width="3.2" height="3.2" fill="#a4a4a4"/><rect x="6.9" y="16.4" width="3.2" height="3.2" fill="#a4a4a4"/><path d="M16 7 V19" stroke="#fff" stroke-width="0.9"/><path d="M13.3 6.9 H20.1 V19.2 H13.3" fill="none" stroke="#fff" stroke-width="1.4"/><circle cx="20.1" cy="6.9" r="1.8" fill="#fff"/><circle cx="20.1" cy="19.2" r="1.8" fill="#fff"/></g>
<rect x="711.5" y="6.4" width="66.3" height="33.7" rx="6" fill="#000" opacity=".26" filter="url(#bsh)"/>
<rect x="711.5" y="5.5" width="66.3" height="33.7" rx="6" fill="url(#btg)" stroke="rgba(0,0,0,.09)" stroke-width="0.5"/>
<g transform="translate(733 8.6)"><rect x="3.8" y="2.4" width="15.6" height="22.6" rx="2.4" fill="#e9e9e9" stroke="#575757" stroke-width="1.5"/><path d="M3.8 7.4 H19.4" stroke="#8a8a8a" stroke-width="1"/><circle cx="6.8" cy="5.1" r="0.8" fill="#666"/><circle cx="9.4" cy="5.1" r="0.8" fill="#666"/></g>
</svg>

<!-- text -->
<div class="a" style="left:0;top:0;width:1650px;height:1350px;opacity:.999">
<span class="t" style="left:20.3px;top:13px;font-size:20.2px;font-weight:400;color:#3a3a3a;letter-spacing:-0.262px;-webkit-text-stroke:0.22px #3a3a3a">iPad Pro 12.9&quot;</span>
<span class="t" style="left:99.6px;top:44px;font-size:17px;font-weight:400;color:#3b3b3b;letter-spacing:0.180px;-webkit-text-stroke:0.22px #3b3b3b">Device</span>
<span class="t" style="left:282.6px;top:44px;font-size:17px;font-weight:400;color:#3b3b3b;letter-spacing:0.500px;-webkit-text-stroke:0.22px #3b3b3b">Insert</span>
<span class="t" style="left:363.2px;top:44px;font-size:17px;font-weight:400;color:#a6a6a6;letter-spacing:-0.133px;-webkit-text-stroke:0.22px #a6a6a6">Flow</span>
<span class="t" style="left:487.0px;top:44px;font-size:17px;font-weight:400;color:#3b3b3b;letter-spacing:0.130px;-webkit-text-stroke:0.22px #3b3b3b">Canvas &amp; Patch Editor</span>
<span class="t" style="left:718.5px;top:44px;font-size:17px;font-weight:400;color:#3b3b3b;letter-spacing:0.080px;-webkit-text-stroke:0.22px #3b3b3b">Viewer</span>
<span class="t" style="left:38.9px;top:83px;font-size:17px;font-weight:700;color:#1c1c1c;letter-spacing:-0.222px">COMPONENTS</span>
<span class="t" style="left:39.2px;top:125px;font-size:17px;font-weight:700;color:#1c1c1c;letter-spacing:-0.688px">PROTOTYPE</span>
<span class="t" style="left:67.4px;top:174px;font-size:20.3px;font-weight:400;color:#262626;letter-spacing:-0.078px;-webkit-text-stroke:0.22px #262626">Artboard 1</span>
<span class="t" style="left:88.6px;top:219px;font-size:20.3px;font-weight:400;color:#262626;letter-spacing:0.020px;-webkit-text-stroke:0.22px #262626">card 4</span>
<span class="t" style="left:109.5px;top:264px;font-size:20.3px;font-weight:400;color:#262626;letter-spacing:-0.200px;-webkit-text-stroke:0.22px #262626">card overlay</span>
<span class="t" style="left:109.5px;top:309px;font-size:20.3px;font-weight:400;color:#262626;letter-spacing:0.136px;-webkit-text-stroke:0.22px #262626">card content</span>
<span class="t" style="left:109.5px;top:354px;font-size:20.3px;font-weight:400;color:#262626;letter-spacing:0.133px;-webkit-text-stroke:0.22px #262626">card bg</span>
<span class="t" style="left:88.6px;top:399px;font-size:20.3px;font-weight:400;color:#262626;letter-spacing:0.020px;-webkit-text-stroke:0.22px #262626">card 3</span>
<span class="t" style="left:88.6px;top:444px;font-size:20.3px;font-weight:400;color:#262626;letter-spacing:-0.080px;-webkit-text-stroke:0.22px #262626">card 2</span>
<span class="t" style="left:88.6px;top:489px;font-size:20.3px;font-weight:400;color:#262626;letter-spacing:-0.540px;-webkit-text-stroke:0.22px #262626">card 1</span>
<span class="t" style="left:738.7px;top:818px;font-size:15.8px;font-weight:700;color:#ffffff;letter-spacing:-0.300px">Board card 1</span>
<span class="t" style="left:569.7px;top:847px;font-size:14.0px;font-weight:700;color:#ffffff;letter-spacing:0.022px">Card layer</span>
<span class="t" style="left:648.8px;top:847px;font-size:14.2px;font-weight:400;color:#9a9a9a;letter-spacing:0.160px;-webkit-text-stroke:0.3px #9a9a9a">card 1</span>
<span class="t" style="left:864.1px;top:847px;font-size:14.2px;font-weight:400;color:#9a9a9a;letter-spacing:0.450px;-webkit-text-stroke:0.3px #9a9a9a">0.4</span>
<span class="t" style="left:890.8px;top:847px;font-size:14.0px;font-weight:700;color:#ffffff;letter-spacing:0.043px">Overlay opacity</span>
<span class="t" style="left:569.7px;top:868px;font-size:14.0px;font-weight:700;color:#ffffff;letter-spacing:0.067px">Card position</span>
<span class="t" style="left:668.5px;top:868px;font-size:14.0px;font-weight:700;color:#ffffff;letter-spacing:0.000px">X</span>
<span class="t" style="left:686.7px;top:868px;font-size:14.2px;font-weight:400;color:#9a9a9a;letter-spacing:0.267px;-webkit-text-stroke:0.3px #9a9a9a">96.5</span>
<span class="t" style="left:722.3px;top:868px;font-size:14.0px;font-weight:700;color:#ffffff;letter-spacing:0.000px">Y</span>
<span class="t" style="left:740.2px;top:868px;font-size:14.2px;font-weight:400;color:#9a9a9a;letter-spacing:0.233px;-webkit-text-stroke:0.3px #9a9a9a">90.5</span>
<span class="t" style="left:811.1px;top:868px;font-size:14.0px;font-weight:700;color:#ffffff;letter-spacing:0.000px">W</span>
<span class="t" style="left:832.3px;top:868px;font-size:14.2px;font-weight:400;color:#9a9a9a;letter-spacing:-0.050px;-webkit-text-stroke:0.3px #9a9a9a">275</span>
<span class="t" style="left:867.3px;top:868px;font-size:14.0px;font-weight:700;color:#ffffff;letter-spacing:0.000px">H</span>
<span class="t" style="left:884.5px;top:868px;font-size:14.2px;font-weight:400;color:#9a9a9a;letter-spacing:0.350px;-webkit-text-stroke:0.3px #9a9a9a">193</span>
<span class="t" style="left:925.2px;top:868px;font-size:14.0px;font-weight:700;color:#ffffff;letter-spacing:0.067px">Image size</span>
<span class="t" style="left:569.7px;top:889px;font-size:14.0px;font-weight:700;color:#ffffff;letter-spacing:0.130px">Image layer</span>
<span class="t" style="left:657.9px;top:889px;font-size:14.2px;font-weight:400;color:#9a9a9a;letter-spacing:-0.060px;-webkit-text-stroke:0.3px #9a9a9a">scree…</span>
<span class="t" style="left:742.0px;top:889px;font-size:14.0px;font-weight:700;color:#ffffff;letter-spacing:0.000px">X</span>
<span class="t" style="left:759.4px;top:889px;font-size:14.2px;font-weight:400;color:#9a9a9a;letter-spacing:0.300px;-webkit-text-stroke:0.3px #9a9a9a">96.5</span>
<span class="t" style="left:795.9px;top:889px;font-size:14.0px;font-weight:700;color:#ffffff;letter-spacing:0.000px">Y</span>
<span class="t" style="left:812.7px;top:889px;font-size:14.2px;font-weight:400;color:#9a9a9a;letter-spacing:0.267px;-webkit-text-stroke:0.3px #9a9a9a">90.5</span>
<span class="t" style="left:849.4px;top:889px;font-size:14.0px;font-weight:700;color:#ffffff;letter-spacing:0.000px">Z</span>
<span class="t" style="left:866.4px;top:889px;font-size:14.2px;font-weight:400;color:#9a9a9a;letter-spacing:-0.700px;-webkit-text-stroke:0.3px #9a9a9a">-1</span>
<span class="t" style="left:905.8px;top:889px;font-size:14.0px;font-weight:700;color:#ffffff;letter-spacing:0.050px">Card position</span>
<span class="t" style="left:569.7px;top:910px;font-size:14.0px;font-weight:700;color:#ffffff;letter-spacing:0.225px">Image size (full)</span>
<span class="t" style="left:686.7px;top:910px;font-size:14.0px;font-weight:700;color:#ffffff;letter-spacing:0.000px">W</span>
<span class="t" style="left:708.1px;top:910px;font-size:14.2px;font-weight:400;color:#9a9a9a;letter-spacing:-0.700px;-webkit-text-stroke:0.3px #9a9a9a">11…</span>
<span class="t" style="left:744.2px;top:910px;font-size:14.0px;font-weight:700;color:#ffffff;letter-spacing:0.000px">H</span>
<span class="t" style="left:762.4px;top:910px;font-size:14.2px;font-weight:400;color:#9a9a9a;letter-spacing:0.900px;-webkit-text-stroke:0.3px #9a9a9a">834</span>
<span class="t" style="left:885.0px;top:910px;font-size:14.2px;font-weight:400;color:#9a9a9a;letter-spacing:-0.700px;-webkit-text-stroke:0.3px #9a9a9a">0.1</span>
<span class="t" style="left:908.9px;top:910px;font-size:14.0px;font-weight:700;color:#ffffff;letter-spacing:-0.050px">Card shadow</span>
<span class="t" style="left:569.7px;top:931px;font-size:14.0px;font-weight:700;color:#ffffff;letter-spacing:0.188px">Image size (card)</span>
<span class="t" style="left:695.8px;top:931px;font-size:14.0px;font-weight:700;color:#ffffff;letter-spacing:0.000px">W</span>
<span class="t" style="left:718.2px;top:931px;font-size:14.2px;font-weight:400;color:#9a9a9a;letter-spacing:0.100px;-webkit-text-stroke:0.3px #9a9a9a">275</span>
<span class="t" style="left:753.3px;top:931px;font-size:14.0px;font-weight:700;color:#ffffff;letter-spacing:0.000px">H</span>
<span class="t" style="left:769.8px;top:931px;font-size:14.2px;font-weight:400;color:#9a9a9a;letter-spacing:0.350px;-webkit-text-stroke:0.3px #9a9a9a">193</span>
<span class="t" style="left:820.2px;top:931px;font-size:14.0px;font-weight:700;color:#ffffff;letter-spacing:0.000px">W</span>
<span class="t" style="left:841.4px;top:931px;font-size:14.2px;font-weight:400;color:#9a9a9a;letter-spacing:0.350px;-webkit-text-stroke:0.3px #9a9a9a">234</span>
<span class="t" style="left:876.4px;top:931px;font-size:14.0px;font-weight:700;color:#ffffff;letter-spacing:0.000px">H</span>
<span class="t" style="left:893.5px;top:931px;font-size:14.2px;font-weight:400;color:#9a9a9a;letter-spacing:0.050px;-webkit-text-stroke:0.3px #9a9a9a">126</span>
<span class="t" style="left:934.2px;top:931px;font-size:14.0px;font-weight:700;color:#ffffff;letter-spacing:0.075px">Card size</span>
<span class="t" style="left:1285.2px;top:818px;font-size:15.8px;font-weight:700;color:#ffffff;letter-spacing:0.073px">card overlay</span>
<span class="t" style="left:1283.5px;top:847px;font-size:14.0px;font-weight:700;color:#ffffff;letter-spacing:-0.033px">Opacity</span>
<span class="t" style="left:1346.5px;top:847px;font-size:14.2px;font-weight:400;color:#86bdf0;letter-spacing:0.150px;-webkit-text-stroke:0.3px #86bdf0">0.4</span>
<span class="t" style="left:1310.6px;top:902px;font-size:15.8px;font-weight:700;color:#ffffff;letter-spacing:0.111px">screenshot</span>
<span class="t" style="left:1283.5px;top:931px;font-size:14.0px;font-weight:700;color:#ffffff;letter-spacing:-0.133px">Size</span>
<span class="t" style="left:1319.8px;top:931px;font-size:14.0px;font-weight:700;color:#ffffff;letter-spacing:0.000px">W</span>
<span class="t" style="left:1342.1px;top:931px;font-size:14.2px;font-weight:400;color:#86bdf0;letter-spacing:0.150px;-webkit-text-stroke:0.3px #86bdf0">275</span>
<span class="t" style="left:1377.3px;top:931px;font-size:14.0px;font-weight:700;color:#ffffff;letter-spacing:0.000px">H</span>
<span class="t" style="left:1394.0px;top:931px;font-size:14.2px;font-weight:400;color:#86bdf0;letter-spacing:0.500px;-webkit-text-stroke:0.3px #86bdf0">193</span>
<span class="t" style="left:1367.6px;top:986px;font-size:15.8px;font-weight:700;color:#ffffff;letter-spacing:-0.440px">card 1</span>
<span class="t" style="left:1283.5px;top:1015px;font-size:14.0px;font-weight:700;color:#ffffff;letter-spacing:-0.100px">Position</span>
<span class="t" style="left:1346.5px;top:1015px;font-size:14.0px;font-weight:700;color:#ffffff;letter-spacing:0.000px">X</span>
<span class="t" style="left:1364.7px;top:1015px;font-size:14.2px;font-weight:400;color:#86bdf0;letter-spacing:0.267px;-webkit-text-stroke:0.3px #86bdf0">96.5</span>
<span class="t" style="left:1400.3px;top:1015px;font-size:14.0px;font-weight:700;color:#ffffff;letter-spacing:0.000px">Y</span>
<span class="t" style="left:1417.8px;top:1015px;font-size:14.2px;font-weight:400;color:#86bdf0;letter-spacing:0.333px;-webkit-text-stroke:0.3px #86bdf0">90.5</span>
<span class="t" style="left:1453.2px;top:1015px;font-size:14.0px;font-weight:700;color:#ffffff;letter-spacing:0.000px">Z</span>
<span class="t" style="left:1471.3px;top:1015px;font-size:14.2px;font-weight:400;color:#86bdf0;letter-spacing:-0.100px;-webkit-text-stroke:0.3px #86bdf0">-1</span>
<span class="t" style="left:1330.0px;top:1070px;font-size:15.8px;font-weight:700;color:#ffffff;letter-spacing:0.083px">card bg</span>
<span class="t" style="left:1283.5px;top:1099px;font-size:14.0px;font-weight:700;color:#ffffff;letter-spacing:0.100px">Shadow Opacity</span>
<span class="t" style="left:1405.2px;top:1099px;font-size:14.2px;font-weight:400;color:#86bdf0;letter-spacing:-0.450px;-webkit-text-stroke:0.3px #86bdf0">0.1</span>
<span class="t" style="left:1324.8px;top:1154px;font-size:15.8px;font-weight:700;color:#ffffff;letter-spacing:0.083px">card bg</span>
<span class="t" style="left:1283.5px;top:1183px;font-size:14.0px;font-weight:700;color:#ffffff;letter-spacing:-0.133px">Size</span>
<span class="t" style="left:1319.8px;top:1183px;font-size:14.0px;font-weight:700;color:#ffffff;letter-spacing:0.000px">W</span>
<span class="t" style="left:1342.1px;top:1183px;font-size:14.2px;font-weight:400;color:#86bdf0;letter-spacing:0.150px;-webkit-text-stroke:0.3px #86bdf0">234</span>
<span class="t" style="left:1377.3px;top:1183px;font-size:14.0px;font-weight:700;color:#ffffff;letter-spacing:0.000px">H</span>
<span class="t" style="left:1394.0px;top:1183px;font-size:14.2px;font-weight:400;color:#86bdf0;letter-spacing:0.500px;-webkit-text-stroke:0.3px #86bdf0">126</span>
<span class="t" style="left:1306.3px;top:1238px;font-size:15.8px;font-weight:700;color:#ffffff;letter-spacing:0.073px">card overlay</span>
<span class="t" style="left:1283.5px;top:1267px;font-size:14.0px;font-weight:700;color:#ffffff;letter-spacing:-0.133px">Size</span>
<span class="t" style="left:1319.8px;top:1267px;font-size:14.0px;font-weight:700;color:#ffffff;letter-spacing:0.000px">W</span>
<span class="t" style="left:1342.1px;top:1267px;font-size:14.2px;font-weight:400;color:#86bdf0;letter-spacing:0.150px;-webkit-text-stroke:0.3px #86bdf0">234</span>
<span class="t" style="left:1377.3px;top:1267px;font-size:14.0px;font-weight:700;color:#ffffff;letter-spacing:0.000px">H</span>
<span class="t" style="left:1394.0px;top:1267px;font-size:14.2px;font-weight:400;color:#86bdf0;letter-spacing:0.500px;-webkit-text-stroke:0.3px #86bdf0">126</span>
<span class="t" style="left:1333.6px;top:1322px;font-size:15.8px;font-weight:700;color:#ffffff;letter-spacing:-0.333px">mask</span>
</div>
</body></html>
